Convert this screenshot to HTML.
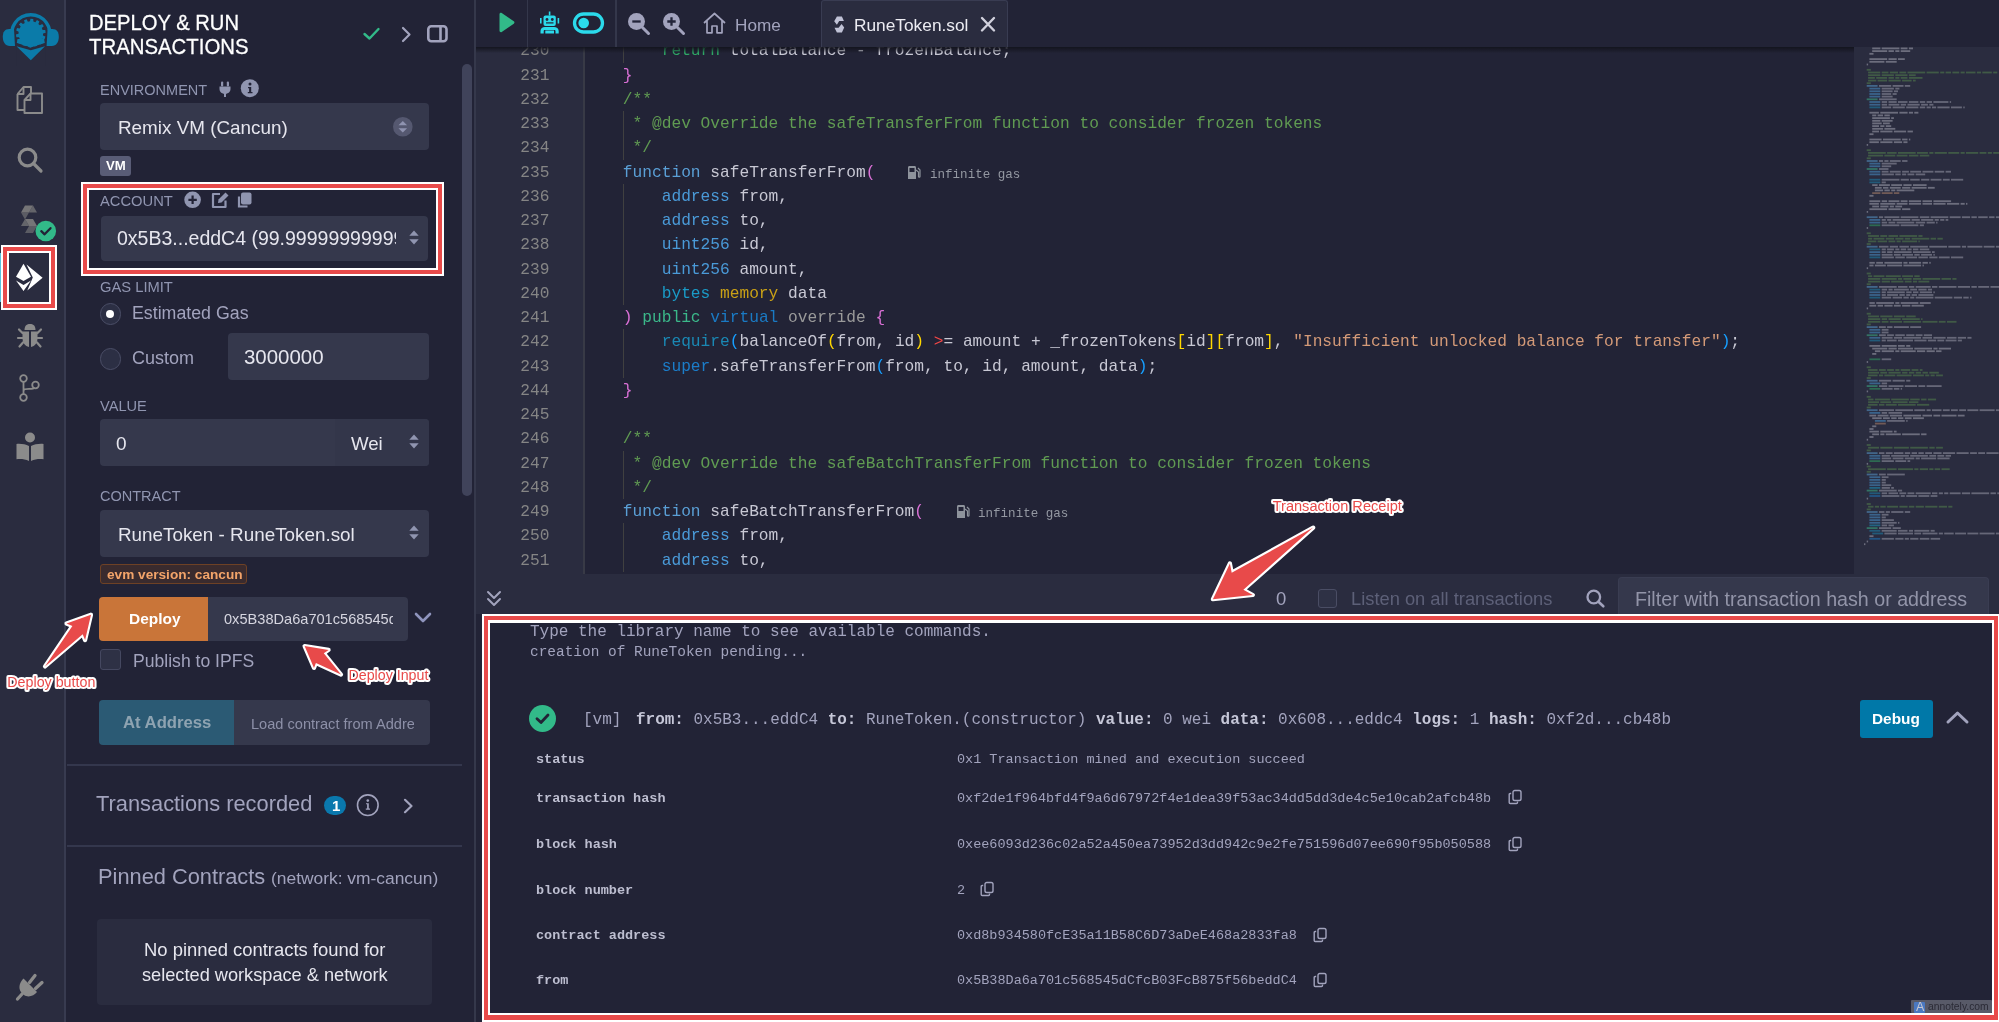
<!DOCTYPE html>
<html><head><meta charset="utf-8"><title>Remix - Deploy & Run</title>
<style>
html,body{margin:0;padding:0;width:1999px;height:1022px;overflow:hidden;background:#222336;}
.r{position:absolute;box-sizing:border-box;}
svg.r{overflow:visible;}
.t{position:absolute;white-space:pre;will-change:transform;font-family:"Liberation Sans",sans-serif;}
</style></head><body>
<div class="r" style="left:0px;top:0px;width:65.00px;height:1022.00px;background:#2a2c3f;"></div>
<div class="r" style="left:64.2px;top:0px;width:2.00px;height:1022.00px;background:#383b50;"></div>
<div class="r" style="left:66px;top:0px;width:408.00px;height:1022.00px;background:#222336;"></div>
<div class="r" style="left:474px;top:0px;width:1.50px;height:1022.00px;background:#35384b;"></div>
<div class="r" style="left:475.5px;top:0px;width:1523.50px;height:1022.00px;background:#222336;"></div>
<svg class="r" style="left:0px;top:0px;" width="66.00" height="66.00" viewBox="0 0 66 66">
<g fill="#0b7ba9">
<path d="M10.83 40.49 A21.0 21.0 0 1 1 50.77 40.49 L47.54 39.44 A17.6 17.6 0 1 0 14.06 39.44Z"/>
<path d="M14 29 L9.3 29 C4.6 29 2.8 32.2 2.8 36.8 C2.8 42.3 5.2 45.9 9.8 45.9 L15 45.9Z"/>
<path d="M47.6 29 L52.3 29 C57 29 58.8 32.2 58.8 36.8 C58.8 42.3 56.4 45.9 51.8 45.9 L46.6 45.9Z"/>
<path d="M29.97 21.33 L30.47 18.70 L33.26 18.90 L33.38 21.57 L35.38 22.18 L36.96 20.03 L39.39 21.43 L38.34 23.88 L39.88 25.30 L42.24 24.05 L43.82 26.36 L41.81 28.11 L42.58 30.06 L45.25 29.96 L45.67 32.73 L43.10 33.43 L42.95 35.52 L45.40 36.59 L44.58 39.27 L41.95 38.79 L40.91 40.60 L42.65 42.63 L40.75 44.69 L38.60 43.11 L36.87 44.30 L37.56 46.88 L34.96 47.91 L33.70 45.55 L31.63 45.87 L31.13 48.50 L28.34 48.30 L28.22 45.63 L26.22 45.02 L24.64 47.17 L22.21 45.77 L23.26 43.32 L21.72 41.90 L19.36 43.15 L17.78 40.84 L19.79 39.09 L19.02 37.14 L16.35 37.24 L15.93 34.47 L18.50 33.77 L18.65 31.68 L16.20 30.61 L17.02 27.93 L19.65 28.41 L20.69 26.60 L18.95 24.57 L20.85 22.51 L23.00 24.09 L24.73 22.90 L24.04 20.32 L26.64 19.29 L27.90 21.65Z"/>
<path d="M17.5 39 L44.1 39 L44.8 43.1 L30.8 47.6 L16.8 43.1Z"/>
</g>
<path d="M16.2 43.2 L30.8 47.7 L45.4 43.2 L45.4 66 L16.2 66Z" fill="#2a2c3f"/>
<path d="M16.5 46.3 L30.8 50.3 L45 46.3 L30.8 60.2Z" fill="#0b7ba9"/>
</svg>
<svg class="r" style="left:15px;top:84px;" width="31.00" height="31.00" viewBox="0 0 31 31"><g fill="none" stroke="#8b8b8b" stroke-width="1.9" stroke-linejoin="round">
<path d="M2.5 10 L8.5 3 L16 3 L16 9 M2.5 10 L2.5 26 L10 26"/>
<path d="M9.5 16 L15.5 9.5 L27 9.5 L27 29 L9.5 29 Z"/>
<path d="M9.5 16 L15.5 16 L15.5 9.5"/>
<path d="M2.5 10 L8.5 10 L8.5 3"/>
</g></svg>
<svg class="r" style="left:15px;top:145px;" width="30.00" height="30.00" viewBox="0 0 30 30"><g fill="none" stroke="#8b8b8b" stroke-width="3.2" stroke-linecap="round"><circle cx="12.5" cy="12.5" r="8.3"/><path d="M18.5 18.5 L26 26"/></g></svg>
<svg class="r" style="left:19px;top:203px;" width="23.00" height="31.00" viewBox="0 0 23 31"><g fill="#7d7d7d">
<path d="M6 2.5 L14 2.5 L10 9.5 L2 9.5 Z" opacity=".9"/><path d="M14 2.5 L18 9.5 L10 9.5Z" opacity=".7"/><path d="M2 9.5 L10 9.5 L6 16.5 Z" opacity=".6"/>
<path d="M6 16 L14 16 L18 23 L10 23Z" opacity=".9"/><path d="M6 16 L10 23 L2 23Z" opacity=".7"/><path d="M10 23 L18 23 L14 30 L6 30Z" opacity=".6"/>
</g></svg>
<svg class="r" style="left:35px;top:220px;" width="22.00" height="22.00" viewBox="0 0 22 22"><circle cx="10.8" cy="11" r="10.3" fill="#32ba89"/><path d="M6.3 11.2 L9.6 14.3 L15.5 8.2" fill="none" stroke="#222336" stroke-width="2.3" stroke-linecap="round" stroke-linejoin="round"/></svg>
<div class="r" style="left:0px;top:253px;width:2.50px;height:49.00px;background:#5bc0de;"></div>
<div class="r" style="left:1px;top:244.5px;width:56.00px;height:65.50px;background:#ffffff;"></div>
<div class="r" style="left:3px;top:246.5px;width:52.00px;height:61.50px;background:#e84a4a;"></div>
<div class="r" style="left:7px;top:250.5px;width:44.00px;height:53.50px;background:#ffffff;"></div>
<div class="r" style="left:9px;top:252.5px;width:40.00px;height:49.50px;background:#2a2c3f;"></div>
<svg class="r" style="left:0px;top:250px;" width="66.00" height="50.00" viewBox="0 0 66 50"><g fill="#ffffff">
<path d="M16 26.8 L23.5 13.8 L31 26.8 L23.5 31Z"/>
<path d="M16 30.5 L23.5 35 L31 30.5 L23.5 41Z"/>
<path d="M26.5 14.5 L42.6 27.8 L27.3 40.5 L32.8 27.6Z"/>
</g></svg>
<svg class="r" style="left:16px;top:322px;" width="28.00" height="28.00" viewBox="0 0 28 28"><g fill="#8b8b8b">
<path d="M8.5 8 C8.5 3.5 11 2 14 2 C17 2 19.5 3.5 19.5 8 Z"/>
<path d="M6.5 9.5 L13 9.5 L13 25 C9 24 6.5 21 6.5 16 Z"/>
<path d="M15 9.5 L21.5 9.5 L21.5 16 C21.5 21 19 24 15 25 Z"/>
</g><g stroke="#8b8b8b" stroke-width="2.2" stroke-linecap="round" fill="none">
<path d="M6.5 11 L3 7.5 M21.5 11 L25 7.5 M6.5 16 L2 16 M21.5 16 L26 16 M7 20.5 L3.5 24.5 M21 20.5 L24.5 24.5"/></g></svg>
<svg class="r" style="left:17px;top:373px;" width="25.00" height="30.00" viewBox="0 0 25 30"><g fill="none" stroke="#8b8b8b" stroke-width="1.8">
<circle cx="6.5" cy="5.5" r="3.3"/><circle cx="18.5" cy="12" r="3.3"/><circle cx="6.5" cy="24.5" r="3.3"/>
<path d="M6.5 8.8 L6.5 21.2 M6.5 18.5 C6.5 16 8 15.8 12 15.8 C15 15.8 16.8 15.8 17.2 15"/></g></svg>
<svg class="r" style="left:14px;top:431px;" width="32.00" height="32.00" viewBox="0 0 32 32"><g fill="#8b8b8b"><circle cx="16" cy="6.5" r="5"/>
<path d="M2.5 13 C7 12.5 11.5 13.5 15 15 L15 30 C11 28.3 7 27.8 2.5 28.3Z"/>
<path d="M29.5 13 C25 12.5 20.5 13.5 17 15 L17 30 C21 28.3 25 27.8 29.5 28.3Z"/></g></svg>
<svg class="r" style="left:14px;top:971px;" width="32.00" height="31.00" viewBox="0 0 32 31"><g fill="#8b8b8b">
<path d="M9.5 7.5 L23 21 C20 25 14 27 10 24 L7 21 C4 17 5.5 11.5 9.5 7.5Z"/>
</g><g stroke="#8b8b8b" stroke-width="3.3" stroke-linecap="round">
<path d="M15.5 11.5 L21 4.5 M21.5 17.5 L28 11.5 M8.5 22.5 L3.5 28"/></g></svg>
<div class="t" style="left:88.50px;top:11.00px;font-size:20.20px;line-height:24px;color:#ffffff;font-family:'Liberation Sans',sans-serif;-webkit-text-stroke:0.25px #fff;transform:scaleY(1.09);transform-origin:0 19.00px;">DEPLOY &amp; RUN</div>
<div class="t" style="left:88.50px;top:34.94px;font-size:20.36px;line-height:24px;color:#ffffff;font-family:'Liberation Sans',sans-serif;-webkit-text-stroke:0.25px #fff;transform:scaleY(1.09);transform-origin:0 19.06px;">TRANSACTIONS</div>
<svg class="r" style="left:362px;top:26px;" width="19.00" height="15.00" viewBox="0 0 19 15"><path d="M2.5 8 L7.5 12.5 L16.5 3" fill="none" stroke="#32ba89" stroke-width="2.4" stroke-linecap="round" stroke-linejoin="round"/></svg>
<svg class="r" style="left:400px;top:25px;" width="13.00" height="18.00" viewBox="0 0 13 18"><path d="M3 3 L9.5 9.5 L3 16" fill="none" stroke="#a2a3bd" stroke-width="2.2" stroke-linecap="round" stroke-linejoin="round"/></svg>
<svg class="r" style="left:425px;top:23px;" width="25.00" height="22.00" viewBox="0 0 25 22"><g fill="none" stroke="#a2a3bd" stroke-width="2.6"><rect x="3.3" y="3.3" width="18.2" height="15" rx="3"/><path d="M15.5 3.5 L15.5 18.3"/></g></svg>
<div class="r" style="left:462.2px;top:64px;width:10.00px;height:432.00px;background:#40435a;border-radius:6px;"></div>
<div class="t" style="left:100.30px;top:81.67px;font-size:14.51px;line-height:17px;color:#9095b0;font-family:'Liberation Sans',sans-serif;transform:scaleY(1.07);transform-origin:0 13.53px;">ENVIRONMENT</div>
<svg class="r" style="left:217px;top:80px;" width="16.00" height="18.00" viewBox="0 0 16 18"><g fill="#9095b0"><rect x="4" y="1.5" width="2.2" height="5" rx="1"/><rect x="9.8" y="1.5" width="2.2" height="5" rx="1"/><path d="M2.5 6.5 L13.5 6.5 L13.5 9 C13.5 12 11 13.5 9 13.8 L9 17 L7 17 L7 13.8 C5 13.5 2.5 12 2.5 9Z"/></g></svg>
<svg class="r" style="left:240px;top:78px;" width="20.00" height="20.00" viewBox="0 0 20 20"><circle cx="9.8" cy="10.2" r="9" fill="#9095b0"/><g fill="#222336"><circle cx="10" cy="6" r="1.5"/><path d="M8 9 L11.2 9 L11.2 14 L12.5 14 L12.5 15.3 L7.8 15.3 L7.8 14 L9.1 14 L9.1 10.3 L8 10.3Z"/></g></svg>
<div class="r" style="left:100px;top:103px;width:329.00px;height:47.00px;background:#35384c;border-radius:4px;"></div>
<div class="t" style="left:117.50px;top:115.95px;font-size:18.88px;line-height:23px;color:#e6e6ee;font-family:'Liberation Sans',sans-serif;">Remix VM (Cancun)</div>
<svg class="r" style="left:392px;top:116px;" width="22.00" height="22.00" viewBox="0 0 22 22"><circle cx="10.8" cy="10.8" r="9.8" fill="#555870"/><g fill="#8f93b0"><path d="M6.5 9.3 L10.8 5 L15.1 9.3Z"/><path d="M6.5 12.3 L10.8 16.6 L15.1 12.3Z"/></g></svg>
<div class="r" style="left:100px;top:156px;width:31.00px;height:20.00px;background:#595c76;border-radius:3px;"></div>
<div class="t" style="left:105.50px;top:157.72px;font-size:13.20px;line-height:16px;color:#ffffff;font-family:'Liberation Sans',sans-serif;font-weight:bold;">VM</div>
<div class="r" style="left:81px;top:182px;width:362.70px;height:93.50px;background:#ffffff;"></div>
<div class="r" style="left:83px;top:184px;width:358.70px;height:89.50px;background:#e84a4a;"></div>
<div class="r" style="left:87px;top:188px;width:350.70px;height:81.50px;background:#ffffff;"></div>
<div class="r" style="left:89px;top:190px;width:346.70px;height:77.50px;background:#222336;"></div>
<div class="t" style="left:100.00px;top:192.19px;font-size:14.74px;line-height:18px;color:#9095b0;font-family:'Liberation Sans',sans-serif;transform:scaleY(1.05);transform-origin:0 14.11px;">ACCOUNT</div>
<svg class="r" style="left:183px;top:190px;" width="20.00" height="20.00" viewBox="0 0 20 20"><circle cx="9.6" cy="9.8" r="8.3" fill="#9095b0"/><path d="M9.6 5.6 L9.6 14 M5.4 9.8 L13.8 9.8" stroke="#222336" stroke-width="2.2"/></svg>
<svg class="r" style="left:210px;top:190px;" width="20.00" height="20.00" viewBox="0 0 20 20"><g fill="none" stroke="#9095b0" stroke-width="2.2" stroke-linejoin="round"><path d="M10 4 L3 4 L3 17 L15.5 17 L15.5 10.5"/></g><path d="M8 13 L8.5 9.5 L15.5 2.5 L18.5 5.5 L11.5 12.5Z" fill="#9095b0"/></svg>
<svg class="r" style="left:236px;top:191px;" width="18.00" height="18.00" viewBox="0 0 18 18"><g fill="#9095b0"><rect x="5" y="1.5" width="10.5" height="12" rx="2"/></g><path d="M3 5.5 L3 15.5 L11.5 15.5" fill="none" stroke="#9095b0" stroke-width="2.2"/></svg>
<div class="r" style="left:100.5px;top:216px;width:327.80px;height:44.50px;background:#35384c;border-radius:4px;"></div>
<div class="t" style="left:117.40px;top:227.04px;font-size:19.50px;line-height:23px;color:#e6e6ee;font-family:'Liberation Sans',sans-serif;width:279.00px;overflow:hidden;">0x5B3...eddC4 (99.999999999999 ether)</div>
<svg class="r" style="left:407.5px;top:229px;" width="12.00" height="18.00" viewBox="0 0 12.0 18"><g fill="#9095b0"><path d="M1.3 6.8 L6 1.6 L10.7 6.8Z"/><path d="M1.3 10.2 L6 15.4 L10.7 10.2Z"/></g></svg>
<div class="t" style="left:100.00px;top:278.49px;font-size:14.74px;line-height:18px;color:#9095b0;font-family:'Liberation Sans',sans-serif;">GAS LIMIT</div>
<div class="r" style="left:99.5px;top:303.3px;width:21.5px;height:21.5px;border:1.6px solid #4b4e67;border-radius:50%;background:#2c2f44"></div>
<div class="r" style="left:106.4px;top:310.1px;width:8px;height:8px;border-radius:50%;background:#ffffff"></div>
<div class="r" style="left:99.5px;top:348px;width:21.5px;height:21.5px;border:1.6px solid #4b4e67;border-radius:50%;background:#2c2f44"></div>
<div class="t" style="left:132.40px;top:303.04px;font-size:17.77px;line-height:21px;color:#a2a3bd;font-family:'Liberation Sans',sans-serif;">Estimated Gas</div>
<div class="t" style="left:132.40px;top:346.76px;font-size:18.00px;line-height:22px;color:#a2a3bd;font-family:'Liberation Sans',sans-serif;">Custom</div>
<div class="r" style="left:227.5px;top:333px;width:201.80px;height:47.30px;background:#35384c;border-radius:4px;"></div>
<div class="t" style="left:244.40px;top:344.41px;font-size:20.45px;line-height:25px;color:#e6e6ee;font-family:'Liberation Sans',sans-serif;">3000000</div>
<div class="t" style="left:100.00px;top:396.94px;font-size:14.60px;line-height:18px;color:#9095b0;font-family:'Liberation Sans',sans-serif;">VALUE</div>
<div class="r" style="left:100px;top:419.2px;width:329.30px;height:46.80px;background:#35384c;border-radius:4px;"></div>
<div class="r" style="left:334.8px;top:419.2px;width:94.50px;height:46.80px;background:#33364a;border-radius:0 4px 4px 0;"></div>
<div class="t" style="left:116.00px;top:431.91px;font-size:19.00px;line-height:23px;color:#e6e6ee;font-family:'Liberation Sans',sans-serif;">0</div>
<div class="t" style="left:351.20px;top:432.53px;font-size:18.65px;line-height:22px;color:#e6e6ee;font-family:'Liberation Sans',sans-serif;">Wei</div>
<svg class="r" style="left:407.5px;top:433px;" width="12.00" height="18.00" viewBox="0 0 12.0 18"><g fill="#9095b0"><path d="M1.3 6.8 L6 1.6 L10.7 6.8Z"/><path d="M1.3 10.2 L6 15.4 L10.7 10.2Z"/></g></svg>
<div class="t" style="left:100.00px;top:488.46px;font-size:14.53px;line-height:17px;color:#9095b0;font-family:'Liberation Sans',sans-serif;">CONTRACT</div>
<div class="r" style="left:100px;top:510.2px;width:329.30px;height:46.60px;background:#35384c;border-radius:4px;"></div>
<div class="t" style="left:117.50px;top:522.97px;font-size:18.85px;line-height:23px;color:#e6e6ee;font-family:'Liberation Sans',sans-serif;">RuneToken - RuneToken.sol</div>
<svg class="r" style="left:407.5px;top:524px;" width="12.00" height="18.00" viewBox="0 0 12.0 18"><g fill="#9095b0"><path d="M1.3 6.8 L6 1.6 L10.7 6.8Z"/><path d="M1.3 10.2 L6 15.4 L10.7 10.2Z"/></g></svg>
<div class="r" style="left:100px;top:564.2px;width:146.9px;height:19.4px;border:1px solid #6e4125;border-radius:3px;background:#3a2b2e"></div>
<div class="t" style="left:106.70px;top:567.27px;font-size:13.63px;line-height:16px;color:#f3a46a;font-family:'Liberation Sans',sans-serif;font-weight:bold;">evm version: cancun</div>
<div class="r" style="left:99.4px;top:597.4px;width:108.40px;height:43.60px;background:#c97539;border-radius:4px 0 0 4px;"></div>
<div class="r" style="left:207.8px;top:597.4px;width:200.30px;height:43.60px;background:#35384c;border-radius:0 4px 4px 0;"></div>
<div class="t" style="left:128.50px;top:609.45px;font-size:15.44px;line-height:19px;color:#ffffff;font-family:'Liberation Sans',sans-serif;font-weight:bold;">Deploy</div>
<div class="t" style="left:224.00px;top:610.24px;font-size:14.60px;line-height:18px;color:#d6d6e0;font-family:'Liberation Sans',sans-serif;width:169.00px;overflow:hidden;">0x5B38Da6a701c568545dCfcB03FcB875f56beddC4</div>
<svg class="r" style="left:413px;top:610px;" width="20.00" height="17.00" viewBox="0 0 20 17"><path d="M3 4 L10 11 L17 4" fill="none" stroke="#8f94bd" stroke-width="2.6" stroke-linecap="round" stroke-linejoin="round"/></svg>
<div class="r" style="left:100px;top:648.9px;width:21px;height:21px;border:1.2px solid #454860;border-radius:3px;background:#2e3145"></div>
<div class="t" style="left:132.80px;top:650.80px;font-size:17.58px;line-height:21px;color:#a2a3bd;font-family:'Liberation Sans',sans-serif;">Publish to IPFS</div>
<div class="r" style="left:99.4px;top:700px;width:134.60px;height:45.20px;background:#2b5a74;border-radius:4px 0 0 4px;"></div>
<div class="r" style="left:234px;top:700px;width:195.60px;height:45.20px;background:#35384c;border-radius:0 4px 4px 0;"></div>
<div class="t" style="left:123.00px;top:713.11px;font-size:16.71px;line-height:20px;color:#8ea3b1;font-family:'Liberation Sans',sans-serif;font-weight:bold;">At Address</div>
<div class="t" style="left:251.30px;top:714.94px;font-size:14.60px;line-height:18px;color:#8d90a8;font-family:'Liberation Sans',sans-serif;width:163.00px;overflow:hidden;">Load contract from Address</div>
<div class="r" style="left:67px;top:764px;width:395.00px;height:2.00px;background:#34374d;"></div>
<div class="t" style="left:95.70px;top:790.53px;font-size:21.84px;line-height:26px;color:#a2a3bd;font-family:'Liberation Sans',sans-serif;">Transactions recorded</div>
<div class="r" style="left:324px;top:795.5px;width:22px;height:19.7px;border-radius:10px;background:#0a78ad"></div>
<div class="t" style="left:331.50px;top:796.80px;font-size:15.00px;line-height:18px;color:#ffffff;font-family:'Liberation Sans',sans-serif;font-weight:bold;">1</div>
<svg class="r" style="left:355px;top:793px;" width="26.00" height="25.00" viewBox="0 0 26 25"><circle cx="12.8" cy="12.2" r="10.3" fill="none" stroke="#a2a3bd" stroke-width="1.6"/><g fill="#a2a3bd"><circle cx="12.8" cy="7.6" r="1.3"/><path d="M11 10.2 L13.8 10.2 L13.8 15.6 L15 15.6 L15 16.8 L10.8 16.8 L10.8 15.6 L12.1 15.6 L12.1 11.3 L11 11.3Z"/></g></svg>
<svg class="r" style="left:402px;top:797px;" width="14.00" height="18.00" viewBox="0 0 14 18"><path d="M3 2.8 L9.5 9 L3 15.2" fill="none" stroke="#a2a3bd" stroke-width="2.2" stroke-linecap="round" stroke-linejoin="round"/></svg>
<div class="r" style="left:67px;top:844.6px;width:395.00px;height:2.00px;background:#34374d;"></div>
<div class="t" style="left:97.80px;top:863.84px;font-size:21.80px;line-height:26px;color:#a2a3bd;font-family:'Liberation Sans',sans-serif;">Pinned Contracts</div>
<div class="t" style="left:271.00px;top:867.87px;font-size:17.40px;line-height:21px;color:#a2a3bd;font-family:'Liberation Sans',sans-serif;">(network: vm-cancun)</div>
<div class="r" style="left:96.8px;top:918.7px;width:335.40px;height:86.20px;background:#2a2c3f;border-radius:4px;"></div>
<div class="t" style="left:144.00px;top:938.62px;font-size:18.41px;line-height:22px;color:#e6e6ee;font-family:'Liberation Sans',sans-serif;">No pinned contracts found for</div>
<div class="t" style="left:141.90px;top:964.00px;font-size:18.19px;line-height:22px;color:#e6e6ee;font-family:'Liberation Sans',sans-serif;">selected workspace &amp; network</div>
<div class="r" style="left:475.5px;top:46px;width:107.50px;height:528.00px;background:#2a2c3f;"></div>
<div class="r" style="left:583px;top:46px;width:2.00px;height:528.00px;background:#383a46;"></div>
<div class="r" style="left:1854px;top:46px;width:145.00px;height:528.00px;background:#2a2c3f;"></div>
<div class="r" style="left:475.5px;top:46px;width:1378.5px;height:528px;overflow:hidden">
<div class="t" style="left:108.80px;top:-6.69px;font-size:16.198px;line-height:24.25px;font-family:'Liberation Mono',monospace;"><span style="color:#c8c8d4">        </span><span style="color:#2fa866">return</span><span style="color:#c8c8d4"> totalBalance - frozenBalance;</span></div>
<div class="t" style="left:0px;width:73.50px;text-align:right;top:-6.69px;font-size:16.198px;line-height:24.25px;font-family:'Liberation Mono',monospace;color:#858585">230</div>
<div class="t" style="left:108.80px;top:17.56px;font-size:16.198px;line-height:24.25px;font-family:'Liberation Mono',monospace;"><span style="color:#c8c8d4">    </span><span style="color:#da70d6">}</span></div>
<div class="t" style="left:0px;width:73.50px;text-align:right;top:17.56px;font-size:16.198px;line-height:24.25px;font-family:'Liberation Mono',monospace;color:#858585">231</div>
<div class="t" style="left:108.80px;top:41.81px;font-size:16.198px;line-height:24.25px;font-family:'Liberation Mono',monospace;"><span style="color:#609b52">    /**</span></div>
<div class="t" style="left:0px;width:73.50px;text-align:right;top:41.81px;font-size:16.198px;line-height:24.25px;font-family:'Liberation Mono',monospace;color:#858585">232</div>
<div class="t" style="left:108.80px;top:66.06px;font-size:16.198px;line-height:24.25px;font-family:'Liberation Mono',monospace;"><span style="color:#609b52">     * @dev Override the safeTransferFrom function to consider frozen tokens</span></div>
<div class="t" style="left:0px;width:73.50px;text-align:right;top:66.06px;font-size:16.198px;line-height:24.25px;font-family:'Liberation Mono',monospace;color:#858585">233</div>
<div class="t" style="left:108.80px;top:90.31px;font-size:16.198px;line-height:24.25px;font-family:'Liberation Mono',monospace;"><span style="color:#609b52">     */</span></div>
<div class="t" style="left:0px;width:73.50px;text-align:right;top:90.31px;font-size:16.198px;line-height:24.25px;font-family:'Liberation Mono',monospace;color:#858585">234</div>
<div class="t" style="left:108.80px;top:114.56px;font-size:16.198px;line-height:24.25px;font-family:'Liberation Mono',monospace;"><span style="color:#c8c8d4">    </span><span style="color:#5a9fd6">function</span><span style="color:#c8c8d4"> safeTransferFrom</span><span style="color:#da70d6">(</span></div>
<div class="t" style="left:0px;width:73.50px;text-align:right;top:114.56px;font-size:16.198px;line-height:24.25px;font-family:'Liberation Mono',monospace;color:#858585">235</div>
<div class="t" style="left:108.80px;top:138.81px;font-size:16.198px;line-height:24.25px;font-family:'Liberation Mono',monospace;"><span style="color:#c8c8d4">        </span><span style="color:#4a9ad8">address</span><span style="color:#c8c8d4"> from,</span></div>
<div class="t" style="left:0px;width:73.50px;text-align:right;top:138.81px;font-size:16.198px;line-height:24.25px;font-family:'Liberation Mono',monospace;color:#858585">236</div>
<div class="t" style="left:108.80px;top:163.06px;font-size:16.198px;line-height:24.25px;font-family:'Liberation Mono',monospace;"><span style="color:#c8c8d4">        </span><span style="color:#4a9ad8">address</span><span style="color:#c8c8d4"> to,</span></div>
<div class="t" style="left:0px;width:73.50px;text-align:right;top:163.06px;font-size:16.198px;line-height:24.25px;font-family:'Liberation Mono',monospace;color:#858585">237</div>
<div class="t" style="left:108.80px;top:187.31px;font-size:16.198px;line-height:24.25px;font-family:'Liberation Mono',monospace;"><span style="color:#c8c8d4">        </span><span style="color:#4a9ad8">uint256</span><span style="color:#c8c8d4"> id,</span></div>
<div class="t" style="left:0px;width:73.50px;text-align:right;top:187.31px;font-size:16.198px;line-height:24.25px;font-family:'Liberation Mono',monospace;color:#858585">238</div>
<div class="t" style="left:108.80px;top:211.56px;font-size:16.198px;line-height:24.25px;font-family:'Liberation Mono',monospace;"><span style="color:#c8c8d4">        </span><span style="color:#4a9ad8">uint256</span><span style="color:#c8c8d4"> amount,</span></div>
<div class="t" style="left:0px;width:73.50px;text-align:right;top:211.56px;font-size:16.198px;line-height:24.25px;font-family:'Liberation Mono',monospace;color:#858585">239</div>
<div class="t" style="left:108.80px;top:235.81px;font-size:16.198px;line-height:24.25px;font-family:'Liberation Mono',monospace;"><span style="color:#c8c8d4">        </span><span style="color:#1a9bc7">bytes</span><span style="color:#c8c8d4"> </span><span style="color:#c9a016">memory</span><span style="color:#c8c8d4"> data</span></div>
<div class="t" style="left:0px;width:73.50px;text-align:right;top:235.81px;font-size:16.198px;line-height:24.25px;font-family:'Liberation Mono',monospace;color:#858585">240</div>
<div class="t" style="left:108.80px;top:260.06px;font-size:16.198px;line-height:24.25px;font-family:'Liberation Mono',monospace;"><span style="color:#c8c8d4">    </span><span style="color:#da70d6">)</span><span style="color:#c8c8d4"> </span><span style="color:#3bb88a">public</span><span style="color:#c8c8d4"> </span><span style="color:#1a7ac4">virtual</span><span style="color:#c8c8d4"> </span><span style="color:#9a9a9a">override</span><span style="color:#c8c8d4"> </span><span style="color:#da70d6">{</span></div>
<div class="t" style="left:0px;width:73.50px;text-align:right;top:260.06px;font-size:16.198px;line-height:24.25px;font-family:'Liberation Mono',monospace;color:#858585">241</div>
<div class="t" style="left:108.80px;top:284.31px;font-size:16.198px;line-height:24.25px;font-family:'Liberation Mono',monospace;"><span style="color:#c8c8d4">        </span><span style="color:#1a88b4">require</span><span style="color:#179fff">(</span><span style="color:#c8c8d4">balanceOf</span><span style="color:#ffd700">(</span><span style="color:#c8c8d4">from, id</span><span style="color:#ffd700">)</span><span style="color:#c8c8d4"> </span><span style="color:#f44747">&gt;</span><span style="color:#c8c8d4">= amount + _frozenTokens</span><span style="color:#ffd700">[</span><span style="color:#c8c8d4">id</span><span style="color:#ffd700">]</span><span style="color:#ffd700">[</span><span style="color:#c8c8d4">from</span><span style="color:#ffd700">]</span><span style="color:#c8c8d4">, </span><span style="color:#d49a78">"Insufficient unlocked balance for transfer"</span><span style="color:#179fff">)</span><span style="color:#c8c8d4">;</span></div>
<div class="t" style="left:0px;width:73.50px;text-align:right;top:284.31px;font-size:16.198px;line-height:24.25px;font-family:'Liberation Mono',monospace;color:#858585">242</div>
<div class="t" style="left:108.80px;top:308.56px;font-size:16.198px;line-height:24.25px;font-family:'Liberation Mono',monospace;"><span style="color:#c8c8d4">        </span><span style="color:#1b7dca">super</span><span style="color:#c8c8d4">.safeTransferFrom</span><span style="color:#179fff">(</span><span style="color:#c8c8d4">from, to, id, amount, data</span><span style="color:#179fff">)</span><span style="color:#c8c8d4">;</span></div>
<div class="t" style="left:0px;width:73.50px;text-align:right;top:308.56px;font-size:16.198px;line-height:24.25px;font-family:'Liberation Mono',monospace;color:#858585">243</div>
<div class="t" style="left:108.80px;top:332.81px;font-size:16.198px;line-height:24.25px;font-family:'Liberation Mono',monospace;"><span style="color:#c8c8d4">    </span><span style="color:#da70d6">}</span></div>
<div class="t" style="left:0px;width:73.50px;text-align:right;top:332.81px;font-size:16.198px;line-height:24.25px;font-family:'Liberation Mono',monospace;color:#858585">244</div>
<div class="t" style="left:108.80px;top:357.06px;font-size:16.198px;line-height:24.25px;font-family:'Liberation Mono',monospace;"></div>
<div class="t" style="left:0px;width:73.50px;text-align:right;top:357.06px;font-size:16.198px;line-height:24.25px;font-family:'Liberation Mono',monospace;color:#858585">245</div>
<div class="t" style="left:108.80px;top:381.31px;font-size:16.198px;line-height:24.25px;font-family:'Liberation Mono',monospace;"><span style="color:#609b52">    /**</span></div>
<div class="t" style="left:0px;width:73.50px;text-align:right;top:381.31px;font-size:16.198px;line-height:24.25px;font-family:'Liberation Mono',monospace;color:#858585">246</div>
<div class="t" style="left:108.80px;top:405.56px;font-size:16.198px;line-height:24.25px;font-family:'Liberation Mono',monospace;"><span style="color:#609b52">     * @dev Override the safeBatchTransferFrom function to consider frozen tokens</span></div>
<div class="t" style="left:0px;width:73.50px;text-align:right;top:405.56px;font-size:16.198px;line-height:24.25px;font-family:'Liberation Mono',monospace;color:#858585">247</div>
<div class="t" style="left:108.80px;top:429.81px;font-size:16.198px;line-height:24.25px;font-family:'Liberation Mono',monospace;"><span style="color:#609b52">     */</span></div>
<div class="t" style="left:0px;width:73.50px;text-align:right;top:429.81px;font-size:16.198px;line-height:24.25px;font-family:'Liberation Mono',monospace;color:#858585">248</div>
<div class="t" style="left:108.80px;top:454.06px;font-size:16.198px;line-height:24.25px;font-family:'Liberation Mono',monospace;"><span style="color:#c8c8d4">    </span><span style="color:#5a9fd6">function</span><span style="color:#c8c8d4"> safeBatchTransferFrom</span><span style="color:#da70d6">(</span></div>
<div class="t" style="left:0px;width:73.50px;text-align:right;top:454.06px;font-size:16.198px;line-height:24.25px;font-family:'Liberation Mono',monospace;color:#858585">249</div>
<div class="t" style="left:108.80px;top:478.31px;font-size:16.198px;line-height:24.25px;font-family:'Liberation Mono',monospace;"><span style="color:#c8c8d4">        </span><span style="color:#4a9ad8">address</span><span style="color:#c8c8d4"> from,</span></div>
<div class="t" style="left:0px;width:73.50px;text-align:right;top:478.31px;font-size:16.198px;line-height:24.25px;font-family:'Liberation Mono',monospace;color:#858585">250</div>
<div class="t" style="left:108.80px;top:502.56px;font-size:16.198px;line-height:24.25px;font-family:'Liberation Mono',monospace;"><span style="color:#c8c8d4">        </span><span style="color:#4a9ad8">address</span><span style="color:#c8c8d4"> to,</span></div>
<div class="t" style="left:0px;width:73.50px;text-align:right;top:502.56px;font-size:16.198px;line-height:24.25px;font-family:'Liberation Mono',monospace;color:#858585">251</div>
</div>
<div class="r" style="left:622.5px;top:46px;width:1.60px;height:16.50px;background:#404040;"></div>
<div class="r" style="left:622.5px;top:111.0px;width:1.60px;height:48.50px;background:#404040;"></div>
<div class="r" style="left:622.5px;top:183.75px;width:1.60px;height:121.25px;background:#404040;"></div>
<div class="r" style="left:622.5px;top:329.25px;width:1.60px;height:48.50px;background:#404040;"></div>
<div class="r" style="left:622.5px;top:450.5px;width:1.60px;height:48.50px;background:#404040;"></div>
<div class="r" style="left:622.5px;top:523.25px;width:1.60px;height:48.50px;background:#404040;"></div>
<svg class="r" style="left:907px;top:164.6px;" width="14.00" height="15.00" viewBox="0 0 14 15.0"><g fill="#8e939c"><path d="M1 2.5 C1 1.5 1.7 1 2.5 1 L7.5 1 C8.3 1 9 1.5 9 2.5 L9 14 L1 14Z"/></g><rect x="2.5" y="3" width="5" height="4" fill="#222336"/><path d="M9 5 L11.5 7 L11.5 11.5 C11.5 12.5 13 12.5 13 11.5 L13 5 L11 3" fill="none" stroke="#8e939c" stroke-width="1.2"/></svg>
<div class="t" style="left:929.60px;top:167.76px;font-size:12.55px;line-height:15px;color:#9498a2;font-family:'Liberation Mono',monospace;">infinite gas</div>
<svg class="r" style="left:955.6px;top:504.1px;" width="14.00" height="15.00" viewBox="0 0 14.0 15.0"><g fill="#8e939c"><path d="M1 2.5 C1 1.5 1.7 1 2.5 1 L7.5 1 C8.3 1 9 1.5 9 2.5 L9 14 L1 14Z"/></g><rect x="2.5" y="3" width="5" height="4" fill="#222336"/><path d="M9 5 L11.5 7 L11.5 11.5 C11.5 12.5 13 12.5 13 11.5 L13 5 L11 3" fill="none" stroke="#8e939c" stroke-width="1.2"/></svg>
<div class="t" style="left:978.20px;top:507.26px;font-size:12.55px;line-height:15px;color:#9498a2;font-family:'Liberation Mono',monospace;">infinite gas</div>
<svg class="r" style="left:1854px;top:46px;" width="145.00" height="528.00" viewBox="0 0 145 528"><rect x="18.2" y="1.5" width="8.2" height="1.8" fill="#c8c8d4" opacity="0.42"/><rect x="27.7" y="1.5" width="17.7" height="1.8" fill="#c8c8d4" opacity="0.42"/><rect x="46.7" y="1.5" width="6.8" height="1.8" fill="#c8c8d4" opacity="0.42"/><rect x="54.9" y="1.5" width="4.1" height="1.8" fill="#c8c8d4" opacity="0.42"/><rect x="18.2" y="4.2" width="15.0" height="1.8" fill="#c8c8d4" opacity="0.42"/><rect x="34.5" y="4.2" width="5.4" height="1.8" fill="#c8c8d4" opacity="0.42"/><rect x="41.3" y="4.2" width="4.1" height="1.8" fill="#c8c8d4" opacity="0.42"/><rect x="46.7" y="4.2" width="9.5" height="1.8" fill="#c8c8d4" opacity="0.42"/><rect x="15.4" y="6.9" width="4.1" height="1.8" fill="#c8c8d4" opacity="0.42"/><rect x="15.4" y="12.2" width="17.7" height="1.8" fill="#c8c8d4" opacity="0.42"/><rect x="34.5" y="12.2" width="8.2" height="1.8" fill="#c8c8d4" opacity="0.42"/><rect x="44.0" y="12.2" width="6.8" height="1.8" fill="#c8c8d4" opacity="0.42"/><rect x="15.4" y="14.9" width="15.0" height="1.8" fill="#c8c8d4" opacity="0.42"/><rect x="31.8" y="14.9" width="10.9" height="1.8" fill="#c8c8d4" opacity="0.42"/><rect x="12.7" y="17.6" width="1.4" height="1.8" fill="#c8c8d4" opacity="0.42"/><rect x="12.7" y="22.9" width="4.1" height="1.8" fill="#609b52" opacity="0.42"/><rect x="14.1" y="25.6" width="12.2" height="1.8" fill="#609b52" opacity="0.42"/><rect x="27.7" y="25.6" width="6.8" height="1.8" fill="#609b52" opacity="0.42"/><rect x="35.8" y="25.6" width="8.2" height="1.8" fill="#609b52" opacity="0.42"/><rect x="45.4" y="25.6" width="6.8" height="1.8" fill="#609b52" opacity="0.42"/><rect x="53.5" y="25.6" width="17.7" height="1.8" fill="#609b52" opacity="0.42"/><rect x="72.6" y="25.6" width="12.2" height="1.8" fill="#609b52" opacity="0.42"/><rect x="86.2" y="25.6" width="4.1" height="1.8" fill="#609b52" opacity="0.42"/><rect x="91.6" y="25.6" width="5.4" height="1.8" fill="#609b52" opacity="0.42"/><rect x="98.4" y="25.6" width="6.8" height="1.8" fill="#609b52" opacity="0.42"/><rect x="106.6" y="25.6" width="4.1" height="1.8" fill="#609b52" opacity="0.42"/><rect x="112.0" y="25.6" width="9.5" height="1.8" fill="#609b52" opacity="0.42"/><rect x="122.9" y="25.6" width="4.1" height="1.8" fill="#609b52" opacity="0.42"/><rect x="128.3" y="25.6" width="9.5" height="1.8" fill="#609b52" opacity="0.42"/><rect x="139.2" y="25.6" width="4.1" height="1.8" fill="#609b52" opacity="0.42"/><rect x="14.1" y="28.3" width="12.2" height="1.8" fill="#609b52" opacity="0.42"/><rect x="27.7" y="28.3" width="12.2" height="1.8" fill="#609b52" opacity="0.42"/><rect x="41.3" y="28.3" width="12.2" height="1.8" fill="#609b52" opacity="0.42"/><rect x="54.9" y="28.3" width="6.8" height="1.8" fill="#609b52" opacity="0.42"/><rect x="14.1" y="31.0" width="6.8" height="1.8" fill="#609b52" opacity="0.42"/><rect x="22.2" y="31.0" width="10.9" height="1.8" fill="#609b52" opacity="0.42"/><rect x="34.5" y="31.0" width="5.4" height="1.8" fill="#609b52" opacity="0.42"/><rect x="41.3" y="31.0" width="4.1" height="1.8" fill="#609b52" opacity="0.42"/><rect x="46.7" y="31.0" width="6.8" height="1.8" fill="#609b52" opacity="0.42"/><rect x="54.9" y="31.0" width="13.6" height="1.8" fill="#609b52" opacity="0.42"/><rect x="14.1" y="33.7" width="8.2" height="1.8" fill="#609b52" opacity="0.42"/><rect x="23.6" y="33.7" width="9.5" height="1.8" fill="#609b52" opacity="0.42"/><rect x="34.5" y="33.7" width="12.2" height="1.8" fill="#609b52" opacity="0.42"/><rect x="48.1" y="33.7" width="9.5" height="1.8" fill="#609b52" opacity="0.42"/><rect x="59.0" y="33.7" width="2.7" height="1.8" fill="#609b52" opacity="0.42"/><rect x="12.7" y="36.3" width="4.1" height="1.8" fill="#609b52" opacity="0.42"/><rect x="12.7" y="39.0" width="10.9" height="1.8" fill="#5a9fd6" opacity=".5"/><rect x="25.0" y="39.0" width="12.2" height="1.8" fill="#c8c8d4" opacity="0.38"/><rect x="38.6" y="39.0" width="10.9" height="1.8" fill="#c8c8d4" opacity="0.38"/><rect x="50.8" y="39.0" width="5.4" height="1.8" fill="#c8c8d4" opacity="0.38"/><rect x="15.4" y="41.7" width="10.9" height="1.8" fill="#4a9ad8" opacity=".5"/><rect x="27.7" y="41.7" width="12.2" height="1.8" fill="#c8c8d4" opacity="0.38"/><rect x="41.3" y="41.7" width="4.1" height="1.8" fill="#c8c8d4" opacity="0.38"/><rect x="15.4" y="44.4" width="10.9" height="1.8" fill="#4a9ad8" opacity=".5"/><rect x="27.7" y="44.4" width="10.9" height="1.8" fill="#c8c8d4" opacity="0.38"/><rect x="39.9" y="44.4" width="4.1" height="1.8" fill="#c8c8d4" opacity="0.38"/><rect x="15.4" y="47.1" width="10.9" height="1.8" fill="#4a9ad8" opacity=".5"/><rect x="27.7" y="47.1" width="9.5" height="1.8" fill="#c8c8d4" opacity="0.38"/><rect x="38.6" y="47.1" width="4.1" height="1.8" fill="#c8c8d4" opacity="0.38"/><rect x="15.4" y="49.7" width="10.9" height="1.8" fill="#4a9ad8" opacity=".5"/><rect x="27.7" y="49.7" width="10.9" height="1.8" fill="#c8c8d4" opacity="0.38"/><rect x="12.7" y="52.4" width="10.9" height="1.8" fill="#3bb88a" opacity=".5"/><rect x="25.0" y="52.4" width="17.7" height="1.8" fill="#c8c8d4" opacity="0.38"/><rect x="15.4" y="55.1" width="10.9" height="1.8" fill="#4a9ad8" opacity=".5"/><rect x="27.7" y="55.1" width="5.4" height="1.8" fill="#c8c8d4" opacity="0.38"/><rect x="34.5" y="55.1" width="8.2" height="1.8" fill="#c8c8d4" opacity="0.38"/><rect x="44.0" y="55.1" width="9.5" height="1.8" fill="#c8c8d4" opacity="0.38"/><rect x="54.9" y="55.1" width="9.5" height="1.8" fill="#c8c8d4" opacity="0.38"/><rect x="65.8" y="55.1" width="5.4" height="1.8" fill="#c8c8d4" opacity="0.38"/><rect x="72.6" y="55.1" width="5.4" height="1.8" fill="#c8c8d4" opacity="0.38"/><rect x="79.4" y="55.1" width="15.0" height="1.8" fill="#c8c8d4" opacity="0.38"/><rect x="95.7" y="55.1" width="1.4" height="1.8" fill="#c8c8d4" opacity="0.38"/><rect x="15.4" y="57.8" width="10.9" height="1.8" fill="#4a9ad8" opacity=".5"/><rect x="27.7" y="57.8" width="5.4" height="1.8" fill="#c8c8d4" opacity="0.38"/><rect x="34.5" y="57.8" width="10.9" height="1.8" fill="#c8c8d4" opacity="0.38"/><rect x="46.7" y="57.8" width="5.4" height="1.8" fill="#c8c8d4" opacity="0.38"/><rect x="53.5" y="57.8" width="12.2" height="1.8" fill="#c8c8d4" opacity="0.38"/><rect x="67.1" y="57.8" width="6.8" height="1.8" fill="#c8c8d4" opacity="0.38"/><rect x="75.3" y="57.8" width="4.1" height="1.8" fill="#c8c8d4" opacity="0.38"/><rect x="15.4" y="60.5" width="10.9" height="1.8" fill="#1a88b4" opacity=".5"/><rect x="27.7" y="60.5" width="9.5" height="1.8" fill="#c8c8d4" opacity="0.38"/><rect x="38.6" y="60.5" width="12.2" height="1.8" fill="#c8c8d4" opacity="0.38"/><rect x="52.2" y="60.5" width="12.2" height="1.8" fill="#c8c8d4" opacity="0.38"/><rect x="65.8" y="60.5" width="5.4" height="1.8" fill="#c8c8d4" opacity="0.38"/><rect x="72.6" y="60.5" width="4.1" height="1.8" fill="#c8c8d4" opacity="0.38"/><rect x="78.0" y="60.5" width="4.1" height="1.8" fill="#c8c8d4" opacity="0.38"/><rect x="83.4" y="60.5" width="12.2" height="1.8" fill="#c8c8d4" opacity="0.38"/><rect x="97.0" y="60.5" width="10.9" height="1.8" fill="#c8c8d4" opacity="0.38"/><rect x="109.3" y="60.5" width="1.4" height="1.8" fill="#c8c8d4" opacity="0.38"/><rect x="15.4" y="65.8" width="9.5" height="1.8" fill="#c8c8d4" opacity="0.42"/><rect x="26.3" y="65.8" width="17.7" height="1.8" fill="#c8c8d4" opacity="0.42"/><rect x="45.4" y="65.8" width="8.2" height="1.8" fill="#c8c8d4" opacity="0.42"/><rect x="54.9" y="65.8" width="4.1" height="1.8" fill="#c8c8d4" opacity="0.42"/><rect x="60.3" y="65.8" width="4.1" height="1.8" fill="#c8c8d4" opacity="0.42"/><rect x="18.2" y="68.5" width="4.1" height="1.8" fill="#c8c8d4" opacity="0.42"/><rect x="23.6" y="68.5" width="5.4" height="1.8" fill="#c8c8d4" opacity="0.42"/><rect x="30.4" y="68.5" width="5.4" height="1.8" fill="#c8c8d4" opacity="0.42"/><rect x="18.2" y="71.2" width="17.7" height="1.8" fill="#c8c8d4" opacity="0.42"/><rect x="37.2" y="71.2" width="2.7" height="1.8" fill="#c8c8d4" opacity="0.42"/><rect x="18.2" y="73.9" width="8.2" height="1.8" fill="#c8c8d4" opacity="0.42"/><rect x="27.7" y="73.9" width="10.9" height="1.8" fill="#c8c8d4" opacity="0.42"/><rect x="18.2" y="76.5" width="9.5" height="1.8" fill="#c8c8d4" opacity="0.42"/><rect x="29.0" y="76.5" width="6.8" height="1.8" fill="#c8c8d4" opacity="0.42"/><rect x="18.2" y="79.2" width="6.8" height="1.8" fill="#c8c8d4" opacity="0.42"/><rect x="26.3" y="79.2" width="4.1" height="1.8" fill="#c8c8d4" opacity="0.42"/><rect x="31.8" y="79.2" width="5.4" height="1.8" fill="#c8c8d4" opacity="0.42"/><rect x="18.2" y="81.9" width="10.9" height="1.8" fill="#c8c8d4" opacity="0.42"/><rect x="30.4" y="81.9" width="10.9" height="1.8" fill="#c8c8d4" opacity="0.42"/><rect x="18.2" y="84.6" width="6.8" height="1.8" fill="#c8c8d4" opacity="0.42"/><rect x="26.3" y="84.6" width="12.2" height="1.8" fill="#c8c8d4" opacity="0.42"/><rect x="39.9" y="84.6" width="12.2" height="1.8" fill="#c8c8d4" opacity="0.42"/><rect x="53.5" y="84.6" width="5.4" height="1.8" fill="#c8c8d4" opacity="0.42"/><rect x="15.4" y="87.3" width="4.1" height="1.8" fill="#c8c8d4" opacity="0.42"/><rect x="15.4" y="92.6" width="12.2" height="1.8" fill="#c8c8d4" opacity="0.42"/><rect x="29.0" y="92.6" width="17.7" height="1.8" fill="#c8c8d4" opacity="0.42"/><rect x="48.1" y="92.6" width="5.4" height="1.8" fill="#c8c8d4" opacity="0.42"/><rect x="54.9" y="92.6" width="1.4" height="1.8" fill="#c8c8d4" opacity="0.42"/><rect x="15.4" y="95.3" width="9.5" height="1.8" fill="#c8c8d4" opacity="0.42"/><rect x="26.3" y="95.3" width="12.2" height="1.8" fill="#c8c8d4" opacity="0.42"/><rect x="39.9" y="95.3" width="8.2" height="1.8" fill="#c8c8d4" opacity="0.42"/><rect x="49.4" y="95.3" width="4.1" height="1.8" fill="#c8c8d4" opacity="0.42"/><rect x="12.7" y="98.0" width="1.4" height="1.8" fill="#c8c8d4" opacity="0.42"/><rect x="12.7" y="103.3" width="4.1" height="1.8" fill="#609b52" opacity="0.42"/><rect x="14.1" y="106.0" width="17.7" height="1.8" fill="#609b52" opacity="0.42"/><rect x="33.1" y="106.0" width="9.5" height="1.8" fill="#609b52" opacity="0.42"/><rect x="44.0" y="106.0" width="17.7" height="1.8" fill="#609b52" opacity="0.42"/><rect x="63.0" y="106.0" width="10.9" height="1.8" fill="#609b52" opacity="0.42"/><rect x="75.3" y="106.0" width="4.1" height="1.8" fill="#609b52" opacity="0.42"/><rect x="80.7" y="106.0" width="12.2" height="1.8" fill="#609b52" opacity="0.42"/><rect x="94.3" y="106.0" width="10.9" height="1.8" fill="#609b52" opacity="0.42"/><rect x="106.6" y="106.0" width="4.1" height="1.8" fill="#609b52" opacity="0.42"/><rect x="112.0" y="106.0" width="12.2" height="1.8" fill="#609b52" opacity="0.42"/><rect x="125.6" y="106.0" width="6.8" height="1.8" fill="#609b52" opacity="0.42"/><rect x="133.8" y="106.0" width="4.1" height="1.8" fill="#609b52" opacity="0.42"/><rect x="139.2" y="106.0" width="5.8" height="1.8" fill="#609b52" opacity="0.42"/><rect x="14.1" y="108.7" width="15.0" height="1.8" fill="#609b52" opacity="0.42"/><rect x="30.4" y="108.7" width="10.9" height="1.8" fill="#609b52" opacity="0.42"/><rect x="42.6" y="108.7" width="10.9" height="1.8" fill="#609b52" opacity="0.42"/><rect x="54.9" y="108.7" width="9.5" height="1.8" fill="#609b52" opacity="0.42"/><rect x="65.8" y="108.7" width="9.5" height="1.8" fill="#609b52" opacity="0.42"/><rect x="12.7" y="111.4" width="4.1" height="1.8" fill="#609b52" opacity="0.42"/><rect x="12.7" y="114.1" width="10.9" height="1.8" fill="#5a9fd6" opacity=".5"/><rect x="25.0" y="114.1" width="4.1" height="1.8" fill="#c8c8d4" opacity="0.38"/><rect x="30.4" y="114.1" width="4.1" height="1.8" fill="#c8c8d4" opacity="0.38"/><rect x="35.8" y="114.1" width="10.9" height="1.8" fill="#c8c8d4" opacity="0.38"/><rect x="48.1" y="114.1" width="5.4" height="1.8" fill="#c8c8d4" opacity="0.38"/><rect x="15.4" y="116.7" width="10.9" height="1.8" fill="#4a9ad8" opacity=".5"/><rect x="27.7" y="116.7" width="15.0" height="1.8" fill="#c8c8d4" opacity="0.38"/><rect x="15.4" y="119.4" width="10.9" height="1.8" fill="#4a9ad8" opacity=".5"/><rect x="27.7" y="119.4" width="9.5" height="1.8" fill="#c8c8d4" opacity="0.38"/><rect x="12.7" y="122.1" width="10.9" height="1.8" fill="#3bb88a" opacity=".5"/><rect x="25.0" y="122.1" width="9.5" height="1.8" fill="#c8c8d4" opacity="0.38"/><rect x="15.4" y="124.8" width="10.9" height="1.8" fill="#4a9ad8" opacity=".5"/><rect x="27.7" y="124.8" width="6.8" height="1.8" fill="#c8c8d4" opacity="0.38"/><rect x="35.8" y="124.8" width="10.9" height="1.8" fill="#c8c8d4" opacity="0.38"/><rect x="48.1" y="124.8" width="6.8" height="1.8" fill="#c8c8d4" opacity="0.38"/><rect x="56.2" y="124.8" width="10.9" height="1.8" fill="#c8c8d4" opacity="0.38"/><rect x="68.5" y="124.8" width="10.9" height="1.8" fill="#c8c8d4" opacity="0.38"/><rect x="80.7" y="124.8" width="9.5" height="1.8" fill="#c8c8d4" opacity="0.38"/><rect x="91.6" y="124.8" width="5.4" height="1.8" fill="#c8c8d4" opacity="0.38"/><rect x="15.4" y="127.5" width="10.9" height="1.8" fill="#4a9ad8" opacity=".5"/><rect x="27.7" y="127.5" width="12.2" height="1.8" fill="#c8c8d4" opacity="0.38"/><rect x="41.3" y="127.5" width="5.4" height="1.8" fill="#c8c8d4" opacity="0.38"/><rect x="48.1" y="127.5" width="4.1" height="1.8" fill="#c8c8d4" opacity="0.38"/><rect x="53.5" y="127.5" width="6.8" height="1.8" fill="#c8c8d4" opacity="0.38"/><rect x="61.7" y="127.5" width="9.5" height="1.8" fill="#c8c8d4" opacity="0.38"/><rect x="15.4" y="132.8" width="10.9" height="1.8" fill="#1a88b4" opacity=".5"/><rect x="27.7" y="132.8" width="17.7" height="1.8" fill="#c8c8d4" opacity="0.38"/><rect x="46.7" y="132.8" width="8.2" height="1.8" fill="#c8c8d4" opacity="0.38"/><rect x="56.2" y="132.8" width="9.5" height="1.8" fill="#c8c8d4" opacity="0.38"/><rect x="67.1" y="132.8" width="8.2" height="1.8" fill="#c8c8d4" opacity="0.38"/><rect x="76.6" y="132.8" width="10.9" height="1.8" fill="#c8c8d4" opacity="0.38"/><rect x="88.9" y="132.8" width="6.8" height="1.8" fill="#c8c8d4" opacity="0.38"/><rect x="97.0" y="132.8" width="12.2" height="1.8" fill="#c8c8d4" opacity="0.38"/><rect x="15.4" y="135.5" width="10.9" height="1.8" fill="#1a88b4" opacity=".5"/><rect x="27.7" y="135.5" width="4.1" height="1.8" fill="#c8c8d4" opacity="0.38"/><rect x="18.2" y="138.2" width="5.4" height="1.8" fill="#c8c8d4" opacity="0.42"/><rect x="25.0" y="138.2" width="10.9" height="1.8" fill="#c8c8d4" opacity="0.42"/><rect x="37.2" y="138.2" width="10.9" height="1.8" fill="#c8c8d4" opacity="0.42"/><rect x="49.4" y="138.2" width="8.2" height="1.8" fill="#c8c8d4" opacity="0.42"/><rect x="59.0" y="138.2" width="13.6" height="1.8" fill="#c8c8d4" opacity="0.42"/><rect x="20.9" y="140.9" width="6.8" height="1.8" fill="#c8c8d4" opacity="0.42"/><rect x="29.0" y="140.9" width="5.4" height="1.8" fill="#c8c8d4" opacity="0.42"/><rect x="35.8" y="140.9" width="10.9" height="1.8" fill="#c8c8d4" opacity="0.42"/><rect x="48.1" y="140.9" width="8.2" height="1.8" fill="#c8c8d4" opacity="0.42"/><rect x="57.6" y="140.9" width="15.0" height="1.8" fill="#c8c8d4" opacity="0.42"/><rect x="73.9" y="140.9" width="6.8" height="1.8" fill="#c8c8d4" opacity="0.42"/><rect x="20.9" y="143.5" width="8.2" height="1.8" fill="#c8c8d4" opacity="0.42"/><rect x="30.4" y="143.5" width="5.4" height="1.8" fill="#c8c8d4" opacity="0.42"/><rect x="37.2" y="143.5" width="4.1" height="1.8" fill="#c8c8d4" opacity="0.42"/><rect x="42.6" y="143.5" width="17.7" height="1.8" fill="#c8c8d4" opacity="0.42"/><rect x="18.2" y="146.2" width="8.2" height="1.8" fill="#d49a78" opacity="0.42"/><rect x="27.7" y="146.2" width="10.9" height="1.8" fill="#d49a78" opacity="0.42"/><rect x="39.9" y="146.2" width="5.4" height="1.8" fill="#d49a78" opacity="0.42"/><rect x="15.4" y="148.9" width="4.1" height="1.8" fill="#c8c8d4" opacity="0.42"/><rect x="15.4" y="154.3" width="10.9" height="1.8" fill="#c8c8d4" opacity="0.42"/><rect x="27.7" y="154.3" width="5.4" height="1.8" fill="#c8c8d4" opacity="0.42"/><rect x="34.5" y="154.3" width="10.9" height="1.8" fill="#c8c8d4" opacity="0.42"/><rect x="46.7" y="154.3" width="6.8" height="1.8" fill="#c8c8d4" opacity="0.42"/><rect x="54.9" y="154.3" width="12.2" height="1.8" fill="#c8c8d4" opacity="0.42"/><rect x="68.5" y="154.3" width="9.5" height="1.8" fill="#c8c8d4" opacity="0.42"/><rect x="79.4" y="154.3" width="17.7" height="1.8" fill="#c8c8d4" opacity="0.42"/><rect x="15.4" y="156.9" width="9.5" height="1.8" fill="#c8c8d4" opacity="0.42"/><rect x="26.3" y="156.9" width="15.0" height="1.8" fill="#c8c8d4" opacity="0.42"/><rect x="42.6" y="156.9" width="10.9" height="1.8" fill="#c8c8d4" opacity="0.42"/><rect x="54.9" y="156.9" width="12.2" height="1.8" fill="#c8c8d4" opacity="0.42"/><rect x="68.5" y="156.9" width="9.5" height="1.8" fill="#c8c8d4" opacity="0.42"/><rect x="79.4" y="156.9" width="12.2" height="1.8" fill="#c8c8d4" opacity="0.42"/><rect x="93.0" y="156.9" width="12.2" height="1.8" fill="#c8c8d4" opacity="0.42"/><rect x="106.6" y="156.9" width="4.1" height="1.8" fill="#c8c8d4" opacity="0.42"/><rect x="112.0" y="156.9" width="1.4" height="1.8" fill="#c8c8d4" opacity="0.42"/><rect x="18.2" y="159.6" width="6.8" height="1.8" fill="#c8c8d4" opacity="0.42"/><rect x="26.3" y="159.6" width="8.2" height="1.8" fill="#c8c8d4" opacity="0.42"/><rect x="35.8" y="159.6" width="4.1" height="1.8" fill="#c8c8d4" opacity="0.42"/><rect x="41.3" y="159.6" width="6.8" height="1.8" fill="#c8c8d4" opacity="0.42"/><rect x="15.4" y="162.3" width="17.7" height="1.8" fill="#c8c8d4" opacity="0.42"/><rect x="34.5" y="162.3" width="12.2" height="1.8" fill="#c8c8d4" opacity="0.42"/><rect x="48.1" y="162.3" width="8.2" height="1.8" fill="#c8c8d4" opacity="0.42"/><rect x="12.7" y="165.0" width="1.4" height="1.8" fill="#c8c8d4" opacity="0.42"/><rect x="12.7" y="170.3" width="10.9" height="1.8" fill="#5a9fd6" opacity=".5"/><rect x="25.0" y="170.3" width="4.1" height="1.8" fill="#c8c8d4" opacity="0.38"/><rect x="30.4" y="170.3" width="15.0" height="1.8" fill="#c8c8d4" opacity="0.38"/><rect x="46.7" y="170.3" width="17.7" height="1.8" fill="#c8c8d4" opacity="0.38"/><rect x="65.8" y="170.3" width="9.5" height="1.8" fill="#c8c8d4" opacity="0.38"/><rect x="76.6" y="170.3" width="17.7" height="1.8" fill="#c8c8d4" opacity="0.38"/><rect x="95.7" y="170.3" width="10.9" height="1.8" fill="#c8c8d4" opacity="0.38"/><rect x="107.9" y="170.3" width="8.2" height="1.8" fill="#c8c8d4" opacity="0.38"/><rect x="117.4" y="170.3" width="5.4" height="1.8" fill="#c8c8d4" opacity="0.38"/><rect x="124.2" y="170.3" width="9.5" height="1.8" fill="#c8c8d4" opacity="0.38"/><rect x="135.1" y="170.3" width="5.4" height="1.8" fill="#c8c8d4" opacity="0.38"/><rect x="141.9" y="170.3" width="3.1" height="1.8" fill="#c8c8d4" opacity="0.38"/><rect x="15.4" y="173.0" width="10.9" height="1.8" fill="#4a9ad8" opacity=".5"/><rect x="27.7" y="173.0" width="4.1" height="1.8" fill="#c8c8d4" opacity="0.38"/><rect x="33.1" y="173.0" width="4.1" height="1.8" fill="#c8c8d4" opacity="0.38"/><rect x="38.6" y="173.0" width="17.7" height="1.8" fill="#c8c8d4" opacity="0.38"/><rect x="57.6" y="173.0" width="8.2" height="1.8" fill="#c8c8d4" opacity="0.38"/><rect x="67.1" y="173.0" width="12.2" height="1.8" fill="#c8c8d4" opacity="0.38"/><rect x="80.7" y="173.0" width="4.1" height="1.8" fill="#c8c8d4" opacity="0.38"/><rect x="86.2" y="173.0" width="4.1" height="1.8" fill="#c8c8d4" opacity="0.38"/><rect x="91.6" y="173.0" width="2.7" height="1.8" fill="#c8c8d4" opacity="0.38"/><rect x="15.4" y="175.7" width="10.9" height="1.8" fill="#4a9ad8" opacity=".5"/><rect x="27.7" y="175.7" width="5.4" height="1.8" fill="#c8c8d4" opacity="0.38"/><rect x="34.5" y="175.7" width="6.8" height="1.8" fill="#c8c8d4" opacity="0.38"/><rect x="42.6" y="175.7" width="17.7" height="1.8" fill="#c8c8d4" opacity="0.38"/><rect x="61.7" y="175.7" width="9.5" height="1.8" fill="#c8c8d4" opacity="0.38"/><rect x="72.6" y="175.7" width="8.2" height="1.8" fill="#c8c8d4" opacity="0.38"/><rect x="82.1" y="175.7" width="1.4" height="1.8" fill="#c8c8d4" opacity="0.38"/><rect x="15.4" y="178.4" width="10.9" height="1.8" fill="#2fa866" opacity=".5"/><rect x="27.7" y="178.4" width="17.7" height="1.8" fill="#c8c8d4" opacity="0.38"/><rect x="46.7" y="178.4" width="17.7" height="1.8" fill="#c8c8d4" opacity="0.38"/><rect x="65.8" y="178.4" width="4.1" height="1.8" fill="#c8c8d4" opacity="0.38"/><rect x="12.7" y="181.1" width="1.4" height="1.8" fill="#c8c8d4" opacity="0.42"/><rect x="12.7" y="186.4" width="4.1" height="1.8" fill="#609b52" opacity="0.42"/><rect x="14.1" y="189.1" width="10.9" height="1.8" fill="#609b52" opacity="0.42"/><rect x="26.3" y="189.1" width="6.8" height="1.8" fill="#609b52" opacity="0.42"/><rect x="34.5" y="189.1" width="9.5" height="1.8" fill="#609b52" opacity="0.42"/><rect x="45.4" y="189.1" width="17.7" height="1.8" fill="#609b52" opacity="0.42"/><rect x="64.4" y="189.1" width="4.1" height="1.8" fill="#609b52" opacity="0.42"/><rect x="14.1" y="191.8" width="4.1" height="1.8" fill="#609b52" opacity="0.42"/><rect x="19.5" y="191.8" width="10.9" height="1.8" fill="#609b52" opacity="0.42"/><rect x="31.8" y="191.8" width="8.2" height="1.8" fill="#609b52" opacity="0.42"/><rect x="41.3" y="191.8" width="8.2" height="1.8" fill="#609b52" opacity="0.42"/><rect x="50.8" y="191.8" width="5.4" height="1.8" fill="#609b52" opacity="0.42"/><rect x="57.6" y="191.8" width="17.7" height="1.8" fill="#609b52" opacity="0.42"/><rect x="76.6" y="191.8" width="5.4" height="1.8" fill="#609b52" opacity="0.42"/><rect x="83.4" y="191.8" width="5.4" height="1.8" fill="#609b52" opacity="0.42"/><rect x="14.1" y="194.5" width="8.2" height="1.8" fill="#609b52" opacity="0.42"/><rect x="23.6" y="194.5" width="9.5" height="1.8" fill="#609b52" opacity="0.42"/><rect x="34.5" y="194.5" width="6.8" height="1.8" fill="#609b52" opacity="0.42"/><rect x="42.6" y="194.5" width="4.1" height="1.8" fill="#609b52" opacity="0.42"/><rect x="48.1" y="194.5" width="15.0" height="1.8" fill="#609b52" opacity="0.42"/><rect x="64.4" y="194.5" width="1.4" height="1.8" fill="#609b52" opacity="0.42"/><rect x="12.7" y="197.1" width="4.1" height="1.8" fill="#609b52" opacity="0.42"/><rect x="12.7" y="199.8" width="10.9" height="1.8" fill="#5a9fd6" opacity=".5"/><rect x="25.0" y="199.8" width="9.5" height="1.8" fill="#c8c8d4" opacity="0.38"/><rect x="35.8" y="199.8" width="8.2" height="1.8" fill="#c8c8d4" opacity="0.38"/><rect x="45.4" y="199.8" width="9.5" height="1.8" fill="#c8c8d4" opacity="0.38"/><rect x="56.2" y="199.8" width="17.7" height="1.8" fill="#c8c8d4" opacity="0.38"/><rect x="75.3" y="199.8" width="17.7" height="1.8" fill="#c8c8d4" opacity="0.38"/><rect x="94.3" y="199.8" width="12.2" height="1.8" fill="#c8c8d4" opacity="0.38"/><rect x="107.9" y="199.8" width="4.1" height="1.8" fill="#c8c8d4" opacity="0.38"/><rect x="113.4" y="199.8" width="15.0" height="1.8" fill="#c8c8d4" opacity="0.38"/><rect x="129.7" y="199.8" width="10.9" height="1.8" fill="#c8c8d4" opacity="0.38"/><rect x="141.9" y="199.8" width="3.1" height="1.8" fill="#c8c8d4" opacity="0.38"/><rect x="15.4" y="202.5" width="10.9" height="1.8" fill="#1a88b4" opacity=".5"/><rect x="27.7" y="202.5" width="4.1" height="1.8" fill="#c8c8d4" opacity="0.38"/><rect x="33.1" y="202.5" width="6.8" height="1.8" fill="#c8c8d4" opacity="0.38"/><rect x="41.3" y="202.5" width="4.1" height="1.8" fill="#c8c8d4" opacity="0.38"/><rect x="46.7" y="202.5" width="5.4" height="1.8" fill="#c8c8d4" opacity="0.38"/><rect x="53.5" y="202.5" width="4.1" height="1.8" fill="#c8c8d4" opacity="0.38"/><rect x="59.0" y="202.5" width="5.4" height="1.8" fill="#c8c8d4" opacity="0.38"/><rect x="65.8" y="202.5" width="9.5" height="1.8" fill="#c8c8d4" opacity="0.38"/><rect x="15.4" y="205.2" width="10.9" height="1.8" fill="#4a9ad8" opacity=".5"/><rect x="27.7" y="205.2" width="4.1" height="1.8" fill="#c8c8d4" opacity="0.38"/><rect x="33.1" y="205.2" width="5.4" height="1.8" fill="#c8c8d4" opacity="0.38"/><rect x="39.9" y="205.2" width="17.7" height="1.8" fill="#c8c8d4" opacity="0.38"/><rect x="59.0" y="205.2" width="17.7" height="1.8" fill="#c8c8d4" opacity="0.38"/><rect x="78.0" y="205.2" width="2.7" height="1.8" fill="#c8c8d4" opacity="0.38"/><rect x="15.4" y="207.9" width="10.9" height="1.8" fill="#4a9ad8" opacity=".5"/><rect x="27.7" y="207.9" width="10.9" height="1.8" fill="#c8c8d4" opacity="0.38"/><rect x="39.9" y="207.9" width="6.8" height="1.8" fill="#c8c8d4" opacity="0.38"/><rect x="48.1" y="207.9" width="10.9" height="1.8" fill="#c8c8d4" opacity="0.38"/><rect x="60.3" y="207.9" width="5.4" height="1.8" fill="#c8c8d4" opacity="0.38"/><rect x="67.1" y="207.9" width="10.9" height="1.8" fill="#c8c8d4" opacity="0.38"/><rect x="79.4" y="207.9" width="1.4" height="1.8" fill="#c8c8d4" opacity="0.38"/><rect x="15.4" y="210.5" width="10.9" height="1.8" fill="#1a88b4" opacity=".5"/><rect x="27.7" y="210.5" width="12.2" height="1.8" fill="#c8c8d4" opacity="0.38"/><rect x="41.3" y="210.5" width="9.5" height="1.8" fill="#c8c8d4" opacity="0.38"/><rect x="52.2" y="210.5" width="10.9" height="1.8" fill="#c8c8d4" opacity="0.38"/><rect x="64.4" y="210.5" width="9.5" height="1.8" fill="#c8c8d4" opacity="0.38"/><rect x="75.3" y="210.5" width="8.2" height="1.8" fill="#c8c8d4" opacity="0.38"/><rect x="84.8" y="210.5" width="10.9" height="1.8" fill="#c8c8d4" opacity="0.38"/><rect x="97.0" y="210.5" width="12.2" height="1.8" fill="#c8c8d4" opacity="0.38"/><rect x="15.4" y="215.9" width="5.4" height="1.8" fill="#c8c8d4" opacity="0.42"/><rect x="22.2" y="215.9" width="6.8" height="1.8" fill="#c8c8d4" opacity="0.42"/><rect x="30.4" y="215.9" width="17.7" height="1.8" fill="#c8c8d4" opacity="0.42"/><rect x="49.4" y="215.9" width="4.1" height="1.8" fill="#c8c8d4" opacity="0.42"/><rect x="54.9" y="215.9" width="12.2" height="1.8" fill="#c8c8d4" opacity="0.42"/><rect x="68.5" y="215.9" width="5.4" height="1.8" fill="#c8c8d4" opacity="0.42"/><rect x="75.3" y="215.9" width="1.4" height="1.8" fill="#c8c8d4" opacity="0.42"/><rect x="15.4" y="218.6" width="4.1" height="1.8" fill="#c8c8d4" opacity="0.42"/><rect x="20.9" y="218.6" width="10.9" height="1.8" fill="#c8c8d4" opacity="0.42"/><rect x="33.1" y="218.6" width="15.0" height="1.8" fill="#c8c8d4" opacity="0.42"/><rect x="49.4" y="218.6" width="17.7" height="1.8" fill="#c8c8d4" opacity="0.42"/><rect x="68.5" y="218.6" width="1.4" height="1.8" fill="#c8c8d4" opacity="0.42"/><rect x="12.7" y="221.3" width="1.4" height="1.8" fill="#c8c8d4" opacity="0.42"/><rect x="12.7" y="226.6" width="4.1" height="1.8" fill="#609b52" opacity="0.42"/><rect x="14.1" y="229.3" width="4.1" height="1.8" fill="#609b52" opacity="0.42"/><rect x="19.5" y="229.3" width="10.9" height="1.8" fill="#609b52" opacity="0.42"/><rect x="31.8" y="229.3" width="15.0" height="1.8" fill="#609b52" opacity="0.42"/><rect x="48.1" y="229.3" width="10.9" height="1.8" fill="#609b52" opacity="0.42"/><rect x="60.3" y="229.3" width="5.4" height="1.8" fill="#609b52" opacity="0.42"/><rect x="14.1" y="232.0" width="12.2" height="1.8" fill="#609b52" opacity="0.42"/><rect x="27.7" y="232.0" width="15.0" height="1.8" fill="#609b52" opacity="0.42"/><rect x="44.0" y="232.0" width="4.1" height="1.8" fill="#609b52" opacity="0.42"/><rect x="49.4" y="232.0" width="8.2" height="1.8" fill="#609b52" opacity="0.42"/><rect x="59.0" y="232.0" width="8.2" height="1.8" fill="#609b52" opacity="0.42"/><rect x="68.5" y="232.0" width="17.7" height="1.8" fill="#609b52" opacity="0.42"/><rect x="87.5" y="232.0" width="9.5" height="1.8" fill="#609b52" opacity="0.42"/><rect x="98.4" y="232.0" width="4.1" height="1.8" fill="#609b52" opacity="0.42"/><rect x="14.1" y="234.7" width="12.2" height="1.8" fill="#609b52" opacity="0.42"/><rect x="27.7" y="234.7" width="8.2" height="1.8" fill="#609b52" opacity="0.42"/><rect x="37.2" y="234.7" width="12.2" height="1.8" fill="#609b52" opacity="0.42"/><rect x="50.8" y="234.7" width="6.8" height="1.8" fill="#609b52" opacity="0.42"/><rect x="59.0" y="234.7" width="4.1" height="1.8" fill="#609b52" opacity="0.42"/><rect x="64.4" y="234.7" width="10.9" height="1.8" fill="#609b52" opacity="0.42"/><rect x="12.7" y="237.3" width="4.1" height="1.8" fill="#609b52" opacity="0.42"/><rect x="12.7" y="240.0" width="10.9" height="1.8" fill="#5a9fd6" opacity=".5"/><rect x="25.0" y="240.0" width="17.7" height="1.8" fill="#c8c8d4" opacity="0.38"/><rect x="44.0" y="240.0" width="9.5" height="1.8" fill="#c8c8d4" opacity="0.38"/><rect x="54.9" y="240.0" width="5.4" height="1.8" fill="#c8c8d4" opacity="0.38"/><rect x="61.7" y="240.0" width="15.0" height="1.8" fill="#c8c8d4" opacity="0.38"/><rect x="78.0" y="240.0" width="5.4" height="1.8" fill="#c8c8d4" opacity="0.38"/><rect x="84.8" y="240.0" width="17.7" height="1.8" fill="#c8c8d4" opacity="0.38"/><rect x="103.8" y="240.0" width="12.2" height="1.8" fill="#c8c8d4" opacity="0.38"/><rect x="117.4" y="240.0" width="5.4" height="1.8" fill="#c8c8d4" opacity="0.38"/><rect x="124.2" y="240.0" width="10.9" height="1.8" fill="#c8c8d4" opacity="0.38"/><rect x="136.5" y="240.0" width="8.5" height="1.8" fill="#c8c8d4" opacity="0.38"/><rect x="15.4" y="242.7" width="10.9" height="1.8" fill="#1a88b4" opacity=".5"/><rect x="27.7" y="242.7" width="5.4" height="1.8" fill="#c8c8d4" opacity="0.38"/><rect x="34.5" y="242.7" width="4.1" height="1.8" fill="#c8c8d4" opacity="0.38"/><rect x="39.9" y="242.7" width="15.0" height="1.8" fill="#c8c8d4" opacity="0.38"/><rect x="56.2" y="242.7" width="6.8" height="1.8" fill="#c8c8d4" opacity="0.38"/><rect x="64.4" y="242.7" width="8.2" height="1.8" fill="#c8c8d4" opacity="0.38"/><rect x="73.9" y="242.7" width="4.1" height="1.8" fill="#c8c8d4" opacity="0.38"/><rect x="15.4" y="245.4" width="10.9" height="1.8" fill="#4a9ad8" opacity=".5"/><rect x="27.7" y="245.4" width="4.1" height="1.8" fill="#c8c8d4" opacity="0.38"/><rect x="33.1" y="245.4" width="17.7" height="1.8" fill="#c8c8d4" opacity="0.38"/><rect x="52.2" y="245.4" width="5.4" height="1.8" fill="#c8c8d4" opacity="0.38"/><rect x="59.0" y="245.4" width="5.4" height="1.8" fill="#c8c8d4" opacity="0.38"/><rect x="65.8" y="245.4" width="12.2" height="1.8" fill="#c8c8d4" opacity="0.38"/><rect x="79.4" y="245.4" width="1.4" height="1.8" fill="#c8c8d4" opacity="0.38"/><rect x="15.4" y="248.1" width="10.9" height="1.8" fill="#4a9ad8" opacity=".5"/><rect x="27.7" y="248.1" width="4.1" height="1.8" fill="#c8c8d4" opacity="0.38"/><rect x="33.1" y="248.1" width="10.9" height="1.8" fill="#c8c8d4" opacity="0.38"/><rect x="45.4" y="248.1" width="5.4" height="1.8" fill="#c8c8d4" opacity="0.38"/><rect x="52.2" y="248.1" width="4.1" height="1.8" fill="#c8c8d4" opacity="0.38"/><rect x="57.6" y="248.1" width="5.4" height="1.8" fill="#c8c8d4" opacity="0.38"/><rect x="64.4" y="248.1" width="15.0" height="1.8" fill="#c8c8d4" opacity="0.38"/><rect x="15.4" y="250.7" width="10.9" height="1.8" fill="#1a88b4" opacity=".5"/><rect x="27.7" y="250.7" width="9.5" height="1.8" fill="#c8c8d4" opacity="0.38"/><rect x="38.6" y="250.7" width="9.5" height="1.8" fill="#c8c8d4" opacity="0.38"/><rect x="49.4" y="250.7" width="5.4" height="1.8" fill="#c8c8d4" opacity="0.38"/><rect x="56.2" y="250.7" width="4.1" height="1.8" fill="#c8c8d4" opacity="0.38"/><rect x="61.7" y="250.7" width="17.7" height="1.8" fill="#c8c8d4" opacity="0.38"/><rect x="80.7" y="250.7" width="17.7" height="1.8" fill="#c8c8d4" opacity="0.38"/><rect x="99.8" y="250.7" width="8.2" height="1.8" fill="#c8c8d4" opacity="0.38"/><rect x="109.3" y="250.7" width="5.4" height="1.8" fill="#c8c8d4" opacity="0.38"/><rect x="116.1" y="250.7" width="1.4" height="1.8" fill="#c8c8d4" opacity="0.38"/><rect x="15.4" y="256.1" width="5.4" height="1.8" fill="#c8c8d4" opacity="0.42"/><rect x="22.2" y="256.1" width="17.7" height="1.8" fill="#c8c8d4" opacity="0.42"/><rect x="41.3" y="256.1" width="4.1" height="1.8" fill="#c8c8d4" opacity="0.42"/><rect x="46.7" y="256.1" width="17.7" height="1.8" fill="#c8c8d4" opacity="0.42"/><rect x="65.8" y="256.1" width="10.9" height="1.8" fill="#c8c8d4" opacity="0.42"/><rect x="15.4" y="258.8" width="6.8" height="1.8" fill="#c8c8d4" opacity="0.42"/><rect x="23.6" y="258.8" width="5.4" height="1.8" fill="#c8c8d4" opacity="0.42"/><rect x="30.4" y="258.8" width="8.2" height="1.8" fill="#c8c8d4" opacity="0.42"/><rect x="39.9" y="258.8" width="6.8" height="1.8" fill="#c8c8d4" opacity="0.42"/><rect x="48.1" y="258.8" width="8.2" height="1.8" fill="#c8c8d4" opacity="0.42"/><rect x="57.6" y="258.8" width="12.2" height="1.8" fill="#c8c8d4" opacity="0.42"/><rect x="12.7" y="261.5" width="1.4" height="1.8" fill="#c8c8d4" opacity="0.42"/><rect x="12.7" y="266.8" width="4.1" height="1.8" fill="#609b52" opacity="0.42"/><rect x="14.1" y="269.5" width="10.9" height="1.8" fill="#609b52" opacity="0.42"/><rect x="26.3" y="269.5" width="12.2" height="1.8" fill="#609b52" opacity="0.42"/><rect x="39.9" y="269.5" width="10.9" height="1.8" fill="#609b52" opacity="0.42"/><rect x="52.2" y="269.5" width="9.5" height="1.8" fill="#609b52" opacity="0.42"/><rect x="14.1" y="272.2" width="12.2" height="1.8" fill="#609b52" opacity="0.42"/><rect x="27.7" y="272.2" width="5.4" height="1.8" fill="#609b52" opacity="0.42"/><rect x="34.5" y="272.2" width="12.2" height="1.8" fill="#609b52" opacity="0.42"/><rect x="48.1" y="272.2" width="17.7" height="1.8" fill="#609b52" opacity="0.42"/><rect x="67.1" y="272.2" width="1.4" height="1.8" fill="#609b52" opacity="0.42"/><rect x="14.1" y="274.9" width="12.2" height="1.8" fill="#609b52" opacity="0.42"/><rect x="27.7" y="274.9" width="6.8" height="1.8" fill="#609b52" opacity="0.42"/><rect x="35.8" y="274.9" width="12.2" height="1.8" fill="#609b52" opacity="0.42"/><rect x="49.4" y="274.9" width="17.7" height="1.8" fill="#609b52" opacity="0.42"/><rect x="68.5" y="274.9" width="15.0" height="1.8" fill="#609b52" opacity="0.42"/><rect x="84.8" y="274.9" width="6.8" height="1.8" fill="#609b52" opacity="0.42"/><rect x="93.0" y="274.9" width="9.5" height="1.8" fill="#609b52" opacity="0.42"/><rect x="12.7" y="277.5" width="4.1" height="1.8" fill="#609b52" opacity="0.42"/><rect x="12.7" y="280.2" width="10.9" height="1.8" fill="#5a9fd6" opacity=".5"/><rect x="25.0" y="280.2" width="6.8" height="1.8" fill="#c8c8d4" opacity="0.38"/><rect x="33.1" y="280.2" width="5.4" height="1.8" fill="#c8c8d4" opacity="0.38"/><rect x="39.9" y="280.2" width="15.0" height="1.8" fill="#c8c8d4" opacity="0.38"/><rect x="56.2" y="280.2" width="10.9" height="1.8" fill="#c8c8d4" opacity="0.38"/><rect x="15.4" y="282.9" width="10.9" height="1.8" fill="#4a9ad8" opacity=".5"/><rect x="27.7" y="282.9" width="6.8" height="1.8" fill="#c8c8d4" opacity="0.38"/><rect x="15.4" y="285.6" width="10.9" height="1.8" fill="#4a9ad8" opacity=".5"/><rect x="27.7" y="285.6" width="6.8" height="1.8" fill="#c8c8d4" opacity="0.38"/><rect x="12.7" y="288.3" width="10.9" height="1.8" fill="#3bb88a" opacity=".5"/><rect x="25.0" y="288.3" width="6.8" height="1.8" fill="#c8c8d4" opacity="0.38"/><rect x="33.1" y="288.3" width="6.8" height="1.8" fill="#c8c8d4" opacity="0.38"/><rect x="41.3" y="288.3" width="9.5" height="1.8" fill="#c8c8d4" opacity="0.38"/><rect x="52.2" y="288.3" width="8.2" height="1.8" fill="#c8c8d4" opacity="0.38"/><rect x="61.7" y="288.3" width="6.8" height="1.8" fill="#c8c8d4" opacity="0.38"/><rect x="69.8" y="288.3" width="8.2" height="1.8" fill="#c8c8d4" opacity="0.38"/><rect x="15.4" y="290.9" width="10.9" height="1.8" fill="#4a9ad8" opacity=".5"/><rect x="27.7" y="290.9" width="10.9" height="1.8" fill="#c8c8d4" opacity="0.38"/><rect x="39.9" y="290.9" width="8.2" height="1.8" fill="#c8c8d4" opacity="0.38"/><rect x="49.4" y="290.9" width="17.7" height="1.8" fill="#c8c8d4" opacity="0.38"/><rect x="68.5" y="290.9" width="9.5" height="1.8" fill="#c8c8d4" opacity="0.38"/><rect x="79.4" y="290.9" width="12.2" height="1.8" fill="#c8c8d4" opacity="0.38"/><rect x="93.0" y="290.9" width="9.5" height="1.8" fill="#c8c8d4" opacity="0.38"/><rect x="103.8" y="290.9" width="8.2" height="1.8" fill="#c8c8d4" opacity="0.38"/><rect x="113.4" y="290.9" width="4.1" height="1.8" fill="#c8c8d4" opacity="0.38"/><rect x="15.4" y="293.6" width="10.9" height="1.8" fill="#1a88b4" opacity=".5"/><rect x="27.7" y="293.6" width="4.1" height="1.8" fill="#c8c8d4" opacity="0.38"/><rect x="33.1" y="293.6" width="9.5" height="1.8" fill="#c8c8d4" opacity="0.38"/><rect x="44.0" y="293.6" width="15.0" height="1.8" fill="#c8c8d4" opacity="0.38"/><rect x="60.3" y="293.6" width="12.2" height="1.8" fill="#c8c8d4" opacity="0.38"/><rect x="73.9" y="293.6" width="8.2" height="1.8" fill="#c8c8d4" opacity="0.38"/><rect x="83.4" y="293.6" width="6.8" height="1.8" fill="#c8c8d4" opacity="0.38"/><rect x="91.6" y="293.6" width="10.9" height="1.8" fill="#c8c8d4" opacity="0.38"/><rect x="103.8" y="293.6" width="4.1" height="1.8" fill="#c8c8d4" opacity="0.38"/><rect x="15.4" y="299.0" width="10.9" height="1.8" fill="#c8c8d4" opacity="0.42"/><rect x="27.7" y="299.0" width="15.0" height="1.8" fill="#c8c8d4" opacity="0.42"/><rect x="44.0" y="299.0" width="6.8" height="1.8" fill="#c8c8d4" opacity="0.42"/><rect x="52.2" y="299.0" width="4.1" height="1.8" fill="#c8c8d4" opacity="0.42"/><rect x="18.2" y="301.7" width="15.0" height="1.8" fill="#c8c8d4" opacity="0.42"/><rect x="34.5" y="301.7" width="8.2" height="1.8" fill="#c8c8d4" opacity="0.42"/><rect x="44.0" y="301.7" width="15.0" height="1.8" fill="#c8c8d4" opacity="0.42"/><rect x="60.3" y="301.7" width="17.7" height="1.8" fill="#c8c8d4" opacity="0.42"/><rect x="79.4" y="301.7" width="4.1" height="1.8" fill="#c8c8d4" opacity="0.42"/><rect x="84.8" y="301.7" width="12.2" height="1.8" fill="#c8c8d4" opacity="0.42"/><rect x="20.9" y="304.3" width="5.4" height="1.8" fill="#c8c8d4" opacity="0.42"/><rect x="27.7" y="304.3" width="12.2" height="1.8" fill="#c8c8d4" opacity="0.42"/><rect x="41.3" y="304.3" width="4.1" height="1.8" fill="#c8c8d4" opacity="0.42"/><rect x="46.7" y="304.3" width="15.0" height="1.8" fill="#c8c8d4" opacity="0.42"/><rect x="63.0" y="304.3" width="8.2" height="1.8" fill="#c8c8d4" opacity="0.42"/><rect x="72.6" y="304.3" width="8.2" height="1.8" fill="#c8c8d4" opacity="0.42"/><rect x="82.1" y="304.3" width="5.4" height="1.8" fill="#c8c8d4" opacity="0.42"/><rect x="18.2" y="307.0" width="4.1" height="1.8" fill="#c8c8d4" opacity="0.42"/><rect x="15.4" y="312.4" width="10.9" height="1.8" fill="#2fa866" opacity=".5"/><rect x="27.7" y="312.4" width="9.5" height="1.8" fill="#c8c8d4" opacity="0.38"/><rect x="12.7" y="315.1" width="1.4" height="1.8" fill="#c8c8d4" opacity="0.42"/><rect x="12.7" y="320.4" width="4.1" height="1.8" fill="#609b52" opacity="0.42"/><rect x="14.1" y="323.1" width="9.5" height="1.8" fill="#609b52" opacity="0.42"/><rect x="25.0" y="323.1" width="6.8" height="1.8" fill="#609b52" opacity="0.42"/><rect x="33.1" y="323.1" width="6.8" height="1.8" fill="#609b52" opacity="0.42"/><rect x="41.3" y="323.1" width="4.1" height="1.8" fill="#609b52" opacity="0.42"/><rect x="46.7" y="323.1" width="9.5" height="1.8" fill="#609b52" opacity="0.42"/><rect x="57.6" y="323.1" width="6.8" height="1.8" fill="#609b52" opacity="0.42"/><rect x="65.8" y="323.1" width="2.7" height="1.8" fill="#609b52" opacity="0.42"/><rect x="14.1" y="325.8" width="10.9" height="1.8" fill="#609b52" opacity="0.42"/><rect x="26.3" y="325.8" width="6.8" height="1.8" fill="#609b52" opacity="0.42"/><rect x="34.5" y="325.8" width="12.2" height="1.8" fill="#609b52" opacity="0.42"/><rect x="48.1" y="325.8" width="5.4" height="1.8" fill="#609b52" opacity="0.42"/><rect x="54.9" y="325.8" width="5.4" height="1.8" fill="#609b52" opacity="0.42"/><rect x="61.7" y="325.8" width="5.4" height="1.8" fill="#609b52" opacity="0.42"/><rect x="68.5" y="325.8" width="5.4" height="1.8" fill="#609b52" opacity="0.42"/><rect x="75.3" y="325.8" width="9.5" height="1.8" fill="#609b52" opacity="0.42"/><rect x="14.1" y="328.5" width="9.5" height="1.8" fill="#609b52" opacity="0.42"/><rect x="25.0" y="328.5" width="4.1" height="1.8" fill="#609b52" opacity="0.42"/><rect x="30.4" y="328.5" width="10.9" height="1.8" fill="#609b52" opacity="0.42"/><rect x="42.6" y="328.5" width="15.0" height="1.8" fill="#609b52" opacity="0.42"/><rect x="59.0" y="328.5" width="10.9" height="1.8" fill="#609b52" opacity="0.42"/><rect x="71.2" y="328.5" width="4.1" height="1.8" fill="#609b52" opacity="0.42"/><rect x="76.6" y="328.5" width="4.1" height="1.8" fill="#609b52" opacity="0.42"/><rect x="82.1" y="328.5" width="6.8" height="1.8" fill="#609b52" opacity="0.42"/><rect x="12.7" y="331.1" width="4.1" height="1.8" fill="#609b52" opacity="0.42"/><rect x="12.7" y="333.8" width="10.9" height="1.8" fill="#5a9fd6" opacity=".5"/><rect x="25.0" y="333.8" width="12.2" height="1.8" fill="#c8c8d4" opacity="0.38"/><rect x="38.6" y="333.8" width="12.2" height="1.8" fill="#c8c8d4" opacity="0.38"/><rect x="52.2" y="333.8" width="4.1" height="1.8" fill="#c8c8d4" opacity="0.38"/><rect x="15.4" y="336.5" width="10.9" height="1.8" fill="#4a9ad8" opacity=".5"/><rect x="27.7" y="336.5" width="5.4" height="1.8" fill="#c8c8d4" opacity="0.38"/><rect x="12.7" y="339.2" width="10.9" height="1.8" fill="#3bb88a" opacity=".5"/><rect x="25.0" y="339.2" width="8.2" height="1.8" fill="#c8c8d4" opacity="0.38"/><rect x="34.5" y="339.2" width="15.0" height="1.8" fill="#c8c8d4" opacity="0.38"/><rect x="50.8" y="339.2" width="12.2" height="1.8" fill="#c8c8d4" opacity="0.38"/><rect x="64.4" y="339.2" width="6.8" height="1.8" fill="#c8c8d4" opacity="0.38"/><rect x="72.6" y="339.2" width="15.0" height="1.8" fill="#c8c8d4" opacity="0.38"/><rect x="15.4" y="341.9" width="10.9" height="1.8" fill="#2fa866" opacity=".5"/><rect x="27.7" y="341.9" width="10.9" height="1.8" fill="#c8c8d4" opacity="0.38"/><rect x="39.9" y="341.9" width="5.4" height="1.8" fill="#c8c8d4" opacity="0.38"/><rect x="46.7" y="341.9" width="1.4" height="1.8" fill="#c8c8d4" opacity="0.38"/><rect x="12.7" y="344.5" width="1.4" height="1.8" fill="#c8c8d4" opacity="0.42"/><rect x="12.7" y="349.9" width="4.1" height="1.8" fill="#609b52" opacity="0.42"/><rect x="14.1" y="352.6" width="5.4" height="1.8" fill="#609b52" opacity="0.42"/><rect x="20.9" y="352.6" width="15.0" height="1.8" fill="#609b52" opacity="0.42"/><rect x="37.2" y="352.6" width="17.7" height="1.8" fill="#609b52" opacity="0.42"/><rect x="56.2" y="352.6" width="9.5" height="1.8" fill="#609b52" opacity="0.42"/><rect x="67.1" y="352.6" width="5.4" height="1.8" fill="#609b52" opacity="0.42"/><rect x="73.9" y="352.6" width="8.2" height="1.8" fill="#609b52" opacity="0.42"/><rect x="14.1" y="355.3" width="10.9" height="1.8" fill="#609b52" opacity="0.42"/><rect x="26.3" y="355.3" width="10.9" height="1.8" fill="#609b52" opacity="0.42"/><rect x="38.6" y="355.3" width="15.0" height="1.8" fill="#609b52" opacity="0.42"/><rect x="54.9" y="355.3" width="9.5" height="1.8" fill="#609b52" opacity="0.42"/><rect x="14.1" y="357.9" width="9.5" height="1.8" fill="#609b52" opacity="0.42"/><rect x="25.0" y="357.9" width="5.4" height="1.8" fill="#609b52" opacity="0.42"/><rect x="31.8" y="357.9" width="10.9" height="1.8" fill="#609b52" opacity="0.42"/><rect x="44.0" y="357.9" width="17.7" height="1.8" fill="#609b52" opacity="0.42"/><rect x="63.0" y="357.9" width="12.2" height="1.8" fill="#609b52" opacity="0.42"/><rect x="12.7" y="360.6" width="4.1" height="1.8" fill="#609b52" opacity="0.42"/><rect x="12.7" y="363.3" width="10.9" height="1.8" fill="#5a9fd6" opacity=".5"/><rect x="25.0" y="363.3" width="15.0" height="1.8" fill="#c8c8d4" opacity="0.38"/><rect x="41.3" y="363.3" width="17.7" height="1.8" fill="#c8c8d4" opacity="0.38"/><rect x="60.3" y="363.3" width="10.9" height="1.8" fill="#c8c8d4" opacity="0.38"/><rect x="72.6" y="363.3" width="4.1" height="1.8" fill="#c8c8d4" opacity="0.38"/><rect x="78.0" y="363.3" width="9.5" height="1.8" fill="#c8c8d4" opacity="0.38"/><rect x="88.9" y="363.3" width="6.8" height="1.8" fill="#c8c8d4" opacity="0.38"/><rect x="97.0" y="363.3" width="6.8" height="1.8" fill="#c8c8d4" opacity="0.38"/><rect x="105.2" y="363.3" width="6.8" height="1.8" fill="#c8c8d4" opacity="0.38"/><rect x="113.4" y="363.3" width="10.9" height="1.8" fill="#c8c8d4" opacity="0.38"/><rect x="125.6" y="363.3" width="15.0" height="1.8" fill="#c8c8d4" opacity="0.38"/><rect x="141.9" y="363.3" width="3.1" height="1.8" fill="#c8c8d4" opacity="0.38"/><rect x="15.4" y="366.0" width="10.9" height="1.8" fill="#4a9ad8" opacity=".5"/><rect x="27.7" y="366.0" width="5.4" height="1.8" fill="#c8c8d4" opacity="0.38"/><rect x="34.5" y="366.0" width="13.6" height="1.8" fill="#c8c8d4" opacity="0.38"/><rect x="15.4" y="368.7" width="6.8" height="1.8" fill="#c8c8d4" opacity="0.42"/><rect x="23.6" y="368.7" width="10.9" height="1.8" fill="#c8c8d4" opacity="0.42"/><rect x="35.8" y="368.7" width="12.2" height="1.8" fill="#c8c8d4" opacity="0.42"/><rect x="49.4" y="368.7" width="17.7" height="1.8" fill="#c8c8d4" opacity="0.42"/><rect x="68.5" y="368.7" width="9.5" height="1.8" fill="#c8c8d4" opacity="0.42"/><rect x="79.4" y="368.7" width="6.8" height="1.8" fill="#c8c8d4" opacity="0.42"/><rect x="87.5" y="368.7" width="15.0" height="1.8" fill="#c8c8d4" opacity="0.42"/><rect x="103.8" y="368.7" width="6.8" height="1.8" fill="#c8c8d4" opacity="0.42"/><rect x="18.2" y="371.3" width="9.5" height="1.8" fill="#c8c8d4" opacity="0.42"/><rect x="29.0" y="371.3" width="6.8" height="1.8" fill="#c8c8d4" opacity="0.42"/><rect x="37.2" y="371.3" width="5.4" height="1.8" fill="#c8c8d4" opacity="0.42"/><rect x="44.0" y="371.3" width="5.4" height="1.8" fill="#c8c8d4" opacity="0.42"/><rect x="50.8" y="371.3" width="6.8" height="1.8" fill="#c8c8d4" opacity="0.42"/><rect x="59.0" y="371.3" width="10.9" height="1.8" fill="#c8c8d4" opacity="0.42"/><rect x="20.9" y="374.0" width="10.9" height="1.8" fill="#4a9ad8" opacity=".5"/><rect x="33.1" y="374.0" width="17.7" height="1.8" fill="#c8c8d4" opacity="0.38"/><rect x="52.2" y="374.0" width="1.4" height="1.8" fill="#c8c8d4" opacity="0.38"/><rect x="20.9" y="376.7" width="10.9" height="1.8" fill="#d49a78" opacity="0.42"/><rect x="18.2" y="379.4" width="4.1" height="1.8" fill="#c8c8d4" opacity="0.42"/><rect x="15.4" y="382.1" width="4.1" height="1.8" fill="#c8c8d4" opacity="0.42"/><rect x="15.4" y="384.7" width="9.5" height="1.8" fill="#c8c8d4" opacity="0.42"/><rect x="26.3" y="384.7" width="12.2" height="1.8" fill="#c8c8d4" opacity="0.42"/><rect x="39.9" y="384.7" width="2.7" height="1.8" fill="#c8c8d4" opacity="0.42"/><rect x="18.2" y="387.4" width="6.8" height="1.8" fill="#c8c8d4" opacity="0.42"/><rect x="26.3" y="387.4" width="4.1" height="1.8" fill="#c8c8d4" opacity="0.42"/><rect x="31.8" y="387.4" width="15.0" height="1.8" fill="#c8c8d4" opacity="0.42"/><rect x="48.1" y="387.4" width="17.7" height="1.8" fill="#c8c8d4" opacity="0.42"/><rect x="67.1" y="387.4" width="5.4" height="1.8" fill="#c8c8d4" opacity="0.42"/><rect x="15.4" y="390.1" width="4.1" height="1.8" fill="#c8c8d4" opacity="0.42"/><rect x="12.7" y="392.8" width="1.4" height="1.8" fill="#c8c8d4" opacity="0.42"/><rect x="12.7" y="398.1" width="4.1" height="1.8" fill="#609b52" opacity="0.42"/><rect x="14.1" y="400.8" width="10.9" height="1.8" fill="#609b52" opacity="0.42"/><rect x="26.3" y="400.8" width="12.2" height="1.8" fill="#609b52" opacity="0.42"/><rect x="39.9" y="400.8" width="15.0" height="1.8" fill="#609b52" opacity="0.42"/><rect x="56.2" y="400.8" width="17.7" height="1.8" fill="#609b52" opacity="0.42"/><rect x="75.3" y="400.8" width="5.4" height="1.8" fill="#609b52" opacity="0.42"/><rect x="82.1" y="400.8" width="6.8" height="1.8" fill="#609b52" opacity="0.42"/><rect x="12.7" y="403.5" width="4.1" height="1.8" fill="#609b52" opacity="0.42"/><rect x="12.7" y="406.2" width="10.9" height="1.8" fill="#5a9fd6" opacity=".5"/><rect x="25.0" y="406.2" width="5.4" height="1.8" fill="#c8c8d4" opacity="0.38"/><rect x="31.8" y="406.2" width="6.8" height="1.8" fill="#c8c8d4" opacity="0.38"/><rect x="39.9" y="406.2" width="9.5" height="1.8" fill="#c8c8d4" opacity="0.38"/><rect x="50.8" y="406.2" width="5.4" height="1.8" fill="#c8c8d4" opacity="0.38"/><rect x="57.6" y="406.2" width="5.4" height="1.8" fill="#c8c8d4" opacity="0.38"/><rect x="64.4" y="406.2" width="5.4" height="1.8" fill="#c8c8d4" opacity="0.38"/><rect x="71.2" y="406.2" width="6.8" height="1.8" fill="#c8c8d4" opacity="0.38"/><rect x="79.4" y="406.2" width="8.2" height="1.8" fill="#c8c8d4" opacity="0.38"/><rect x="88.9" y="406.2" width="12.2" height="1.8" fill="#c8c8d4" opacity="0.38"/><rect x="102.5" y="406.2" width="12.2" height="1.8" fill="#c8c8d4" opacity="0.38"/><rect x="116.1" y="406.2" width="6.8" height="1.8" fill="#c8c8d4" opacity="0.38"/><rect x="124.2" y="406.2" width="6.8" height="1.8" fill="#c8c8d4" opacity="0.38"/><rect x="132.4" y="406.2" width="12.2" height="1.8" fill="#c8c8d4" opacity="0.38"/><rect x="15.4" y="408.9" width="10.9" height="1.8" fill="#4a9ad8" opacity=".5"/><rect x="27.7" y="408.9" width="8.2" height="1.8" fill="#c8c8d4" opacity="0.38"/><rect x="37.2" y="408.9" width="17.7" height="1.8" fill="#c8c8d4" opacity="0.38"/><rect x="56.2" y="408.9" width="17.7" height="1.8" fill="#c8c8d4" opacity="0.38"/><rect x="75.3" y="408.9" width="6.8" height="1.8" fill="#c8c8d4" opacity="0.38"/><rect x="83.4" y="408.9" width="6.8" height="1.8" fill="#c8c8d4" opacity="0.38"/><rect x="91.6" y="408.9" width="5.4" height="1.8" fill="#c8c8d4" opacity="0.38"/><rect x="15.4" y="411.5" width="10.9" height="1.8" fill="#4a9ad8" opacity=".5"/><rect x="27.7" y="411.5" width="9.5" height="1.8" fill="#c8c8d4" opacity="0.38"/><rect x="38.6" y="411.5" width="10.9" height="1.8" fill="#c8c8d4" opacity="0.38"/><rect x="50.8" y="411.5" width="9.5" height="1.8" fill="#c8c8d4" opacity="0.38"/><rect x="61.7" y="411.5" width="4.1" height="1.8" fill="#c8c8d4" opacity="0.38"/><rect x="67.1" y="411.5" width="15.0" height="1.8" fill="#c8c8d4" opacity="0.38"/><rect x="83.4" y="411.5" width="12.2" height="1.8" fill="#c8c8d4" opacity="0.38"/><rect x="15.4" y="414.2" width="10.9" height="1.8" fill="#2fa866" opacity=".5"/><rect x="27.7" y="414.2" width="12.2" height="1.8" fill="#c8c8d4" opacity="0.38"/><rect x="41.3" y="414.2" width="10.9" height="1.8" fill="#c8c8d4" opacity="0.38"/><rect x="53.5" y="414.2" width="2.7" height="1.8" fill="#c8c8d4" opacity="0.38"/><rect x="12.7" y="416.9" width="1.4" height="1.8" fill="#c8c8d4" opacity="0.42"/><rect x="12.7" y="419.6" width="4.1" height="1.8" fill="#609b52" opacity="0.42"/><rect x="14.1" y="422.3" width="17.7" height="1.8" fill="#609b52" opacity="0.42"/><rect x="33.1" y="422.3" width="9.5" height="1.8" fill="#609b52" opacity="0.42"/><rect x="44.0" y="422.3" width="15.0" height="1.8" fill="#609b52" opacity="0.42"/><rect x="60.3" y="422.3" width="4.1" height="1.8" fill="#609b52" opacity="0.42"/><rect x="65.8" y="422.3" width="8.2" height="1.8" fill="#609b52" opacity="0.42"/><rect x="75.3" y="422.3" width="4.1" height="1.8" fill="#609b52" opacity="0.42"/><rect x="80.7" y="422.3" width="5.4" height="1.8" fill="#609b52" opacity="0.42"/><rect x="87.5" y="422.3" width="8.2" height="1.8" fill="#609b52" opacity="0.42"/><rect x="12.7" y="424.9" width="4.1" height="1.8" fill="#609b52" opacity="0.42"/><rect x="12.7" y="427.6" width="10.9" height="1.8" fill="#5a9fd6" opacity=".5"/><rect x="25.0" y="427.6" width="6.8" height="1.8" fill="#c8c8d4" opacity="0.38"/><rect x="33.1" y="427.6" width="17.7" height="1.8" fill="#c8c8d4" opacity="0.38"/><rect x="15.4" y="430.3" width="10.9" height="1.8" fill="#4a9ad8" opacity=".5"/><rect x="27.7" y="430.3" width="6.8" height="1.8" fill="#c8c8d4" opacity="0.38"/><rect x="15.4" y="433.0" width="10.9" height="1.8" fill="#4a9ad8" opacity=".5"/><rect x="27.7" y="433.0" width="4.1" height="1.8" fill="#c8c8d4" opacity="0.38"/><rect x="15.4" y="435.7" width="10.9" height="1.8" fill="#4a9ad8" opacity=".5"/><rect x="27.7" y="435.7" width="4.1" height="1.8" fill="#c8c8d4" opacity="0.38"/><rect x="15.4" y="438.3" width="10.9" height="1.8" fill="#4a9ad8" opacity=".5"/><rect x="27.7" y="438.3" width="9.5" height="1.8" fill="#c8c8d4" opacity="0.38"/><rect x="15.4" y="441.0" width="10.9" height="1.8" fill="#1a9bc7" opacity=".5"/><rect x="27.7" y="441.0" width="8.2" height="1.8" fill="#c8c8d4" opacity="0.38"/><rect x="37.2" y="441.0" width="2.7" height="1.8" fill="#c8c8d4" opacity="0.38"/><rect x="12.7" y="443.7" width="10.9" height="1.8" fill="#3bb88a" opacity=".5"/><rect x="25.0" y="443.7" width="17.7" height="1.8" fill="#c8c8d4" opacity="0.38"/><rect x="44.0" y="443.7" width="4.1" height="1.8" fill="#c8c8d4" opacity="0.38"/><rect x="15.4" y="446.4" width="10.9" height="1.8" fill="#1a88b4" opacity=".5"/><rect x="27.7" y="446.4" width="5.4" height="1.8" fill="#c8c8d4" opacity="0.38"/><rect x="34.5" y="446.4" width="9.5" height="1.8" fill="#c8c8d4" opacity="0.38"/><rect x="45.4" y="446.4" width="6.8" height="1.8" fill="#c8c8d4" opacity="0.38"/><rect x="53.5" y="446.4" width="6.8" height="1.8" fill="#c8c8d4" opacity="0.38"/><rect x="61.7" y="446.4" width="15.0" height="1.8" fill="#c8c8d4" opacity="0.38"/><rect x="78.0" y="446.4" width="5.4" height="1.8" fill="#c8c8d4" opacity="0.38"/><rect x="84.8" y="446.4" width="4.1" height="1.8" fill="#c8c8d4" opacity="0.38"/><rect x="90.2" y="446.4" width="4.1" height="1.8" fill="#c8c8d4" opacity="0.38"/><rect x="95.7" y="446.4" width="10.9" height="1.8" fill="#c8c8d4" opacity="0.38"/><rect x="107.9" y="446.4" width="8.2" height="1.8" fill="#c8c8d4" opacity="0.38"/><rect x="117.4" y="446.4" width="17.7" height="1.8" fill="#c8c8d4" opacity="0.38"/><rect x="136.5" y="446.4" width="5.4" height="1.8" fill="#c8c8d4" opacity="0.38"/><rect x="143.3" y="446.4" width="1.7" height="1.8" fill="#c8c8d4" opacity="0.38"/><rect x="15.4" y="449.1" width="10.9" height="1.8" fill="#1b7dca" opacity=".5"/><rect x="27.7" y="449.1" width="17.7" height="1.8" fill="#c8c8d4" opacity="0.38"/><rect x="46.7" y="449.1" width="4.1" height="1.8" fill="#c8c8d4" opacity="0.38"/><rect x="52.2" y="449.1" width="10.9" height="1.8" fill="#c8c8d4" opacity="0.38"/><rect x="64.4" y="449.1" width="10.9" height="1.8" fill="#c8c8d4" opacity="0.38"/><rect x="76.6" y="449.1" width="6.8" height="1.8" fill="#c8c8d4" opacity="0.38"/><rect x="12.7" y="451.7" width="1.4" height="1.8" fill="#c8c8d4" opacity="0.42"/><rect x="12.7" y="457.1" width="4.1" height="1.8" fill="#609b52" opacity="0.42"/><rect x="14.1" y="459.8" width="5.4" height="1.8" fill="#609b52" opacity="0.42"/><rect x="20.9" y="459.8" width="4.1" height="1.8" fill="#609b52" opacity="0.42"/><rect x="26.3" y="459.8" width="5.4" height="1.8" fill="#609b52" opacity="0.42"/><rect x="33.1" y="459.8" width="10.9" height="1.8" fill="#609b52" opacity="0.42"/><rect x="45.4" y="459.8" width="8.2" height="1.8" fill="#609b52" opacity="0.42"/><rect x="54.9" y="459.8" width="5.4" height="1.8" fill="#609b52" opacity="0.42"/><rect x="61.7" y="459.8" width="8.2" height="1.8" fill="#609b52" opacity="0.42"/><rect x="71.2" y="459.8" width="12.2" height="1.8" fill="#609b52" opacity="0.42"/><rect x="84.8" y="459.8" width="8.2" height="1.8" fill="#609b52" opacity="0.42"/><rect x="94.3" y="459.8" width="4.1" height="1.8" fill="#609b52" opacity="0.42"/><rect x="12.7" y="462.5" width="4.1" height="1.8" fill="#609b52" opacity="0.42"/><rect x="12.7" y="465.1" width="10.9" height="1.8" fill="#5a9fd6" opacity=".5"/><rect x="25.0" y="465.1" width="5.4" height="1.8" fill="#c8c8d4" opacity="0.38"/><rect x="31.8" y="465.1" width="4.1" height="1.8" fill="#c8c8d4" opacity="0.38"/><rect x="37.2" y="465.1" width="12.2" height="1.8" fill="#c8c8d4" opacity="0.38"/><rect x="50.8" y="465.1" width="5.4" height="1.8" fill="#c8c8d4" opacity="0.38"/><rect x="15.4" y="467.8" width="10.9" height="1.8" fill="#4a9ad8" opacity=".5"/><rect x="27.7" y="467.8" width="6.8" height="1.8" fill="#c8c8d4" opacity="0.38"/><rect x="15.4" y="470.5" width="10.9" height="1.8" fill="#4a9ad8" opacity=".5"/><rect x="27.7" y="470.5" width="4.1" height="1.8" fill="#c8c8d4" opacity="0.38"/><rect x="15.4" y="473.2" width="10.9" height="1.8" fill="#4a9ad8" opacity=".5"/><rect x="27.7" y="473.2" width="12.2" height="1.8" fill="#c8c8d4" opacity="0.38"/><rect x="15.4" y="475.9" width="10.9" height="1.8" fill="#4a9ad8" opacity=".5"/><rect x="27.7" y="475.9" width="15.0" height="1.8" fill="#c8c8d4" opacity="0.38"/><rect x="44.0" y="475.9" width="1.4" height="1.8" fill="#c8c8d4" opacity="0.38"/><rect x="15.4" y="478.5" width="10.9" height="1.8" fill="#1a9bc7" opacity=".5"/><rect x="27.7" y="478.5" width="5.4" height="1.8" fill="#c8c8d4" opacity="0.38"/><rect x="34.5" y="478.5" width="5.4" height="1.8" fill="#c8c8d4" opacity="0.38"/><rect x="12.7" y="481.2" width="10.9" height="1.8" fill="#3bb88a" opacity=".5"/><rect x="25.0" y="481.2" width="12.2" height="1.8" fill="#c8c8d4" opacity="0.38"/><rect x="38.6" y="481.2" width="8.2" height="1.8" fill="#c8c8d4" opacity="0.38"/><rect x="15.4" y="483.9" width="10.9" height="1.8" fill="#1a88b4" opacity=".5"/><rect x="27.7" y="483.9" width="15.0" height="1.8" fill="#c8c8d4" opacity="0.38"/><rect x="44.0" y="483.9" width="9.5" height="1.8" fill="#c8c8d4" opacity="0.38"/><rect x="54.9" y="483.9" width="4.1" height="1.8" fill="#c8c8d4" opacity="0.38"/><rect x="60.3" y="483.9" width="15.0" height="1.8" fill="#c8c8d4" opacity="0.38"/><rect x="76.6" y="483.9" width="4.1" height="1.8" fill="#c8c8d4" opacity="0.38"/><rect x="18.2" y="486.6" width="10.9" height="1.8" fill="#1a88b4" opacity=".5"/><rect x="30.4" y="486.6" width="12.2" height="1.8" fill="#c8c8d4" opacity="0.38"/><rect x="44.0" y="486.6" width="15.0" height="1.8" fill="#c8c8d4" opacity="0.38"/><rect x="60.3" y="486.6" width="6.8" height="1.8" fill="#c8c8d4" opacity="0.38"/><rect x="68.5" y="486.6" width="15.0" height="1.8" fill="#c8c8d4" opacity="0.38"/><rect x="84.8" y="486.6" width="4.1" height="1.8" fill="#c8c8d4" opacity="0.38"/><rect x="90.2" y="486.6" width="9.5" height="1.8" fill="#c8c8d4" opacity="0.38"/><rect x="101.1" y="486.6" width="10.9" height="1.8" fill="#c8c8d4" opacity="0.38"/><rect x="113.4" y="486.6" width="10.9" height="1.8" fill="#c8c8d4" opacity="0.38"/><rect x="125.6" y="486.6" width="15.0" height="1.8" fill="#c8c8d4" opacity="0.38"/><rect x="141.9" y="486.6" width="3.1" height="1.8" fill="#c8c8d4" opacity="0.38"/><rect x="15.4" y="489.3" width="4.1" height="1.8" fill="#c8c8d4" opacity="0.42"/><rect x="15.4" y="491.9" width="10.9" height="1.8" fill="#1b7dca" opacity=".5"/><rect x="27.7" y="491.9" width="12.2" height="1.8" fill="#c8c8d4" opacity="0.38"/><rect x="41.3" y="491.9" width="8.2" height="1.8" fill="#c8c8d4" opacity="0.38"/><rect x="50.8" y="491.9" width="4.1" height="1.8" fill="#c8c8d4" opacity="0.38"/><rect x="56.2" y="491.9" width="8.2" height="1.8" fill="#c8c8d4" opacity="0.38"/><rect x="65.8" y="491.9" width="9.5" height="1.8" fill="#c8c8d4" opacity="0.38"/><rect x="76.6" y="491.9" width="9.5" height="1.8" fill="#c8c8d4" opacity="0.38"/><rect x="12.7" y="494.6" width="1.4" height="1.8" fill="#c8c8d4" opacity="0.42"/><rect x="10.0" y="497.3" width="1.4" height="1.8" fill="#c8c8d4" opacity="0.42"/></svg>
<div class="r" style="left:475.5px;top:0px;width:1523.50px;height:46.50px;background:#222336;"></div>
<div class="r" style="left:475.5px;top:46.5px;width:1378.5px;height:6px;background:linear-gradient(rgba(18,19,28,.9),rgba(18,19,28,0))"></div>
<div class="r" style="left:527px;top:0px;width:1.30px;height:46.50px;background:#34374b;"></div>
<div class="r" style="left:615.3px;top:0px;width:1.30px;height:46.50px;background:#34374b;"></div>
<svg class="r" style="left:496px;top:11px;" width="22.00" height="24.00" viewBox="0 0 22 24"><path d="M3.5 3.2 C3.5 2 4.7 1.4 5.7 2 L17.8 10.3 C18.7 10.9 18.7 12.1 17.8 12.7 L5.7 21 C4.7 21.6 3.5 21 3.5 19.8Z" fill="#32ba89"/></svg>
<svg class="r" style="left:538px;top:10px;" width="24.00" height="26.00" viewBox="0 0 24 26"><g fill="#2bdaeb"><rect x="10.8" y="1.5" width="1.6" height="4"/><rect x="5.5" y="5.5" width="12.3" height="10.5" rx="2"/>
<rect x="2" y="8" width="1.6" height="5.5"/><rect x="19.6" y="8" width="1.6" height="5.5"/>
<path d="M2.5 23.5 L2.5 21 C2.5 18.5 4.5 17 7 17 L16 17 C18.5 17 20.7 18.5 20.7 21 L20.7 23.5 L17.5 23.5 L17.5 21 C17.5 20.5 17 20 16.5 20 L6.7 20 C6.2 20 5.7 20.5 5.7 21 L5.7 23.5Z"/>
<rect x="7.3" y="20.5" width="8.7" height="3"/></g>
<g fill="#23253a"><circle cx="9" cy="9.5" r="1.4"/><circle cx="14.3" cy="9.5" r="1.4"/><rect x="8" y="12.3" width="7.5" height="1.2"/></g></svg>
<svg class="r" style="left:571px;top:10px;" width="35.00" height="26.00" viewBox="0 0 35 26"><rect x="3.5" y="4" width="28" height="18" rx="9" fill="none" stroke="#2bdaeb" stroke-width="3.3"/><circle cx="12.7" cy="13" r="5.3" fill="#2bdaeb"/></svg>
<svg class="r" style="left:626px;top:11px;" width="27.00" height="25.00" viewBox="0 0 27 25"><circle cx="10.5" cy="10.5" r="8.5" fill="#a2a3bd"/><path d="M6.3 10.5 L14.7 10.5" stroke="#23253a" stroke-width="2.3"/><path d="M16.5 16.5 L22.5 22.5" stroke="#a2a3bd" stroke-width="3" stroke-linecap="round"/></svg>
<svg class="r" style="left:661px;top:11px;" width="27.00" height="25.00" viewBox="0 0 27 25"><circle cx="10.5" cy="10.5" r="8.5" fill="#a2a3bd"/><path d="M6.3 10.5 L14.7 10.5 M10.5 6.3 L10.5 14.7" stroke="#23253a" stroke-width="2.3"/><path d="M16.5 16.5 L22.5 22.5" stroke="#a2a3bd" stroke-width="3" stroke-linecap="round"/></svg>
<svg class="r" style="left:702px;top:11px;" width="26.00" height="25.00" viewBox="0 0 26 25"><g fill="none" stroke="#a2a3bd" stroke-width="1.7" stroke-linejoin="round"><path d="M2 12 L12.5 2.5 L23 12 M5 9.8 L5 21.8 L10 21.8 L10 15 L15 15 L15 21.8 L20 21.8 L20 9.8"/></g></svg>
<div class="t" style="left:734.50px;top:15.05px;font-size:17.17px;line-height:21px;color:#a2a3bd;font-family:'Liberation Sans',sans-serif;">Home</div>
<div class="r" style="left:820.6px;top:0px;width:187px;height:47px;background:#2a2c3f;border:1px solid #393c52;border-bottom:none;border-radius:3px 3px 0 0"></div>
<svg class="r" style="left:0px;top:0px;" width="1999.00" height="50.00" viewBox="0 0 1999 50"><g fill="#c0c2d6"><path d="M836.9 16.6 L841.9 16.6 L843.9 20.9 L839.2 20.9 L836.9 24.7 L834.2 21.2Z"/><path d="M834.5 27.8 L838.6 27.8 L841.6 24.1 L844.2 27.6 L841.9 32.4 L836.9 32.4Z"/></g></svg>
<div class="t" style="left:854.20px;top:15.00px;font-size:17.31px;line-height:21px;color:#ececf2;font-family:'Liberation Sans',sans-serif;">RuneToken.sol</div>
<svg class="r" style="left:979px;top:15px;" width="18.00" height="19.00" viewBox="0 0 18 19"><path d="M3 3 L15 15.5 M15 3 L3 15.5" stroke="#d0d0dc" stroke-width="2.4" stroke-linecap="round"/></svg>
<div class="r" style="left:475.5px;top:574px;width:1523.50px;height:40.00px;background:#2a2c3f;"></div>
<svg class="r" style="left:484px;top:588px;" width="20.00" height="22.00" viewBox="0 0 20 22"><path d="M4 4 L10 10 L16 4 M4 11 L10 17 L16 11" fill="none" stroke="#a2a3bd" stroke-width="2" stroke-linecap="round" stroke-linejoin="round"/></svg>
<div class="t" style="left:1275.70px;top:587.79px;font-size:18.50px;line-height:22px;color:#a2a3bd;font-family:'Liberation Sans',sans-serif;">0</div>
<div class="r" style="left:1318.3px;top:588.6px;width:19.2px;height:19.2px;border:1.1px solid #4a4d64;border-radius:3px;background:#2e3145"></div>
<div class="t" style="left:1351.20px;top:587.85px;font-size:18.31px;line-height:22px;color:#5d6078;font-family:'Liberation Sans',sans-serif;">Listen on all transactions</div>
<svg class="r" style="left:1585px;top:588px;" width="22.00" height="21.00" viewBox="0 0 22 21"><circle cx="8.8" cy="9" r="6.3" fill="none" stroke="#a2a3bd" stroke-width="2.3"/><path d="M13.5 13.7 L18.3 18.3" stroke="#a2a3bd" stroke-width="2.6" stroke-linecap="round"/></svg>
<div class="r" style="left:1618px;top:577px;width:371px;height:37px;background:#35384c;border:1px solid #3a3d52;border-bottom:none;border-radius:4px 4px 0 0"></div>
<div class="t" style="left:1635.00px;top:587.48px;font-size:19.67px;line-height:24px;color:#9294a8;font-family:'Liberation Sans',sans-serif;">Filter with transaction hash or address</div>
<div class="r" style="left:481.8px;top:613.8px;width:1517.20px;height:408.20px;background:#ffffff;"></div>
<div class="r" style="left:483.9px;top:616px;width:1513.90px;height:403.70px;background:#e84a4a;"></div>
<div class="r" style="left:488px;top:620.2px;width:1506.40px;height:395.10px;background:#ffffff;"></div>
<div class="r" style="left:490px;top:622.8px;width:1502.10px;height:390.20px;background:#222336;"></div>
<div class="t" style="left:530.00px;top:622.64px;font-size:16.00px;line-height:19px;color:#a2a3bd;font-family:'Liberation Mono',monospace;">Type the library name to see available commands.</div>
<div class="t" style="left:529.60px;top:643.86px;font-size:14.44px;line-height:17px;color:#a2a3bd;font-family:'Liberation Mono',monospace;">creation of RuneToken pending...</div>
<svg class="r" style="left:527px;top:703px;" width="31.00" height="31.00" viewBox="0 0 31 31"><circle cx="15.5" cy="15.5" r="13.5" fill="#32ba89"/><path d="M10 15.8 L14 19.5 L21 12" fill="none" stroke="#222336" stroke-width="2.8" stroke-linecap="round" stroke-linejoin="round"/></svg>
<div class="t" style="left:583.40px;top:710.84px;font-size:16.00px;line-height:19px;color:#a2a3bd;font-family:'Liberation Mono',monospace;">[vm]</div>
<div class="t" style="left:636.2px;top:708.35px;font-size:15.973px;line-height:24px;font-family:'Liberation Mono',monospace;"><span style="font-weight:bold;color:#c6c7d8">from:</span><span style="color:#a2a3bd"> 0x5B3...eddC4 </span><span style="font-weight:bold;color:#c6c7d8">to:</span><span style="color:#a2a3bd"> RuneToken.(constructor) </span><span style="font-weight:bold;color:#c6c7d8">value:</span><span style="color:#a2a3bd"> 0 wei </span><span style="font-weight:bold;color:#c6c7d8">data:</span><span style="color:#a2a3bd"> 0x608...eddc4 </span><span style="font-weight:bold;color:#c6c7d8">logs:</span><span style="color:#a2a3bd"> 1 </span><span style="font-weight:bold;color:#c6c7d8">hash:</span><span style="color:#a2a3bd"> 0xf2d...cb48b</span></div>
<div class="r" style="left:1859.5px;top:699.9px;width:73.20px;height:37.80px;background:#0078a8;border-radius:3px;"></div>
<div class="t" style="left:1871.80px;top:709.87px;font-size:15.37px;line-height:18px;color:#ffffff;font-family:'Liberation Sans',sans-serif;font-weight:bold;">Debug</div>
<svg class="r" style="left:1944px;top:706px;" width="27.00" height="22.00" viewBox="0 0 27 22"><path d="M4 16 L13.5 7 L23 16" fill="none" stroke="#a2a3bd" stroke-width="3" stroke-linecap="round" stroke-linejoin="round"/></svg>
<div class="t" style="left:536px;top:750.21px;font-size:13.498px;line-height:20px;font-family:'Liberation Mono',monospace;font-weight:bold;color:#bdbed0">status</div>
<div class="t" style="left:957px;top:750.21px;font-size:13.498px;line-height:20px;font-family:'Liberation Mono',monospace;color:#a2a3bd">0x1 Transaction mined and execution succeed</div>
<div class="t" style="left:536px;top:788.61px;font-size:13.498px;line-height:20px;font-family:'Liberation Mono',monospace;font-weight:bold;color:#bdbed0">transaction hash</div>
<div class="t" style="left:957px;top:788.61px;font-size:13.498px;line-height:20px;font-family:'Liberation Mono',monospace;color:#a2a3bd">0xf2de1f964bfd4f9a6d67972f4e1dea39f53ac34dd5dd3de4c5e10cab2afcb48b</div>
<svg class="r" style="left:1507.8px;top:789.2px;" width="15.00" height="16.00" viewBox="0 0 15.0 16.0"><g fill="none" stroke="#a2a3bd" stroke-width="1.4" stroke-linejoin="round"><rect x="5" y="1.5" width="8" height="10" rx="1.8"/><path d="M3.2 4.5 L2.2 4.5 C1.6 4.5 1.2 5 1.2 5.5 L1.2 13.5 C1.2 14 1.6 14.5 2.2 14.5 L8.5 14.5 C9 14.5 9.5 14 9.5 13.5 L9.5 12.5"/></g></svg>
<div class="t" style="left:536px;top:835.01px;font-size:13.498px;line-height:20px;font-family:'Liberation Mono',monospace;font-weight:bold;color:#bdbed0">block hash</div>
<div class="t" style="left:957px;top:835.01px;font-size:13.498px;line-height:20px;font-family:'Liberation Mono',monospace;color:#a2a3bd">0xee6093d236c02a52a450ea73952d3dd942c9e2fe751596d07ee690f95b050588</div>
<svg class="r" style="left:1507.8px;top:835.6px;" width="15.00" height="16.00" viewBox="0 0 15.0 16.0"><g fill="none" stroke="#a2a3bd" stroke-width="1.4" stroke-linejoin="round"><rect x="5" y="1.5" width="8" height="10" rx="1.8"/><path d="M3.2 4.5 L2.2 4.5 C1.6 4.5 1.2 5 1.2 5.5 L1.2 13.5 C1.2 14 1.6 14.5 2.2 14.5 L8.5 14.5 C9 14.5 9.5 14 9.5 13.5 L9.5 12.5"/></g></svg>
<div class="t" style="left:536px;top:880.51px;font-size:13.498px;line-height:20px;font-family:'Liberation Mono',monospace;font-weight:bold;color:#bdbed0">block number</div>
<div class="t" style="left:957px;top:880.51px;font-size:13.498px;line-height:20px;font-family:'Liberation Mono',monospace;color:#a2a3bd">2</div>
<svg class="r" style="left:980.4px;top:881.1px;" width="15.00" height="16.00" viewBox="0 0 15.0 16.0"><g fill="none" stroke="#a2a3bd" stroke-width="1.4" stroke-linejoin="round"><rect x="5" y="1.5" width="8" height="10" rx="1.8"/><path d="M3.2 4.5 L2.2 4.5 C1.6 4.5 1.2 5 1.2 5.5 L1.2 13.5 C1.2 14 1.6 14.5 2.2 14.5 L8.5 14.5 C9 14.5 9.5 14 9.5 13.5 L9.5 12.5"/></g></svg>
<div class="t" style="left:536px;top:926.41px;font-size:13.498px;line-height:20px;font-family:'Liberation Mono',monospace;font-weight:bold;color:#bdbed0">contract address</div>
<div class="t" style="left:957px;top:926.41px;font-size:13.498px;line-height:20px;font-family:'Liberation Mono',monospace;color:#a2a3bd">0xd8b934580fcE35a11B58C6D73aDeE468a2833fa8</div>
<svg class="r" style="left:1313px;top:927px;" width="15.00" height="16.00" viewBox="0 0 15 16"><g fill="none" stroke="#a2a3bd" stroke-width="1.4" stroke-linejoin="round"><rect x="5" y="1.5" width="8" height="10" rx="1.8"/><path d="M3.2 4.5 L2.2 4.5 C1.6 4.5 1.2 5 1.2 5.5 L1.2 13.5 C1.2 14 1.6 14.5 2.2 14.5 L8.5 14.5 C9 14.5 9.5 14 9.5 13.5 L9.5 12.5"/></g></svg>
<div class="t" style="left:536px;top:971.41px;font-size:13.498px;line-height:20px;font-family:'Liberation Mono',monospace;font-weight:bold;color:#bdbed0">from</div>
<div class="t" style="left:957px;top:971.41px;font-size:13.498px;line-height:20px;font-family:'Liberation Mono',monospace;color:#a2a3bd">0x5B38Da6a701c568545dCfcB03FcB875f56beddC4</div>
<svg class="r" style="left:1313px;top:972px;" width="15.00" height="16.00" viewBox="0 0 15 16"><g fill="none" stroke="#a2a3bd" stroke-width="1.4" stroke-linejoin="round"><rect x="5" y="1.5" width="8" height="10" rx="1.8"/><path d="M3.2 4.5 L2.2 4.5 C1.6 4.5 1.2 5 1.2 5.5 L1.2 13.5 C1.2 14 1.6 14.5 2.2 14.5 L8.5 14.5 C9 14.5 9.5 14 9.5 13.5 L9.5 12.5"/></g></svg>
<div class="r" style="left:1911.1px;top:999.7px;width:80.80px;height:13.10px;background:#585a68;border-radius:1px;"></div>
<div class="r" style="left:1914.4px;top:1002.4px;width:10.30px;height:10.40px;background:#4a78c0;border-radius:1px;"></div>
<div class="t" style="left:1915.60px;top:999.67px;font-size:12.50px;line-height:15px;color:#c8c8d0;font-family:'Liberation Sans',sans-serif;">A</div>
<div class="t" style="left:1928.00px;top:1001.22px;font-size:10.34px;line-height:12px;color:#2a2a35;font-family:'Liberation Sans',sans-serif;">annotely.com</div>
<svg class="r" style="left:0;top:0" width="1999" height="1022"><path d="M1313.2 527.6 L1243.4 589.8 L1252.8 595.0 L1212.9 599.2 L1229.9 563.4 L1231.7 572.7Z" fill="#e84a4a" stroke="#ffffff" stroke-width="4.2" stroke-linejoin="round" paint-order="stroke fill"/></svg>
<svg class="r" style="left:0;top:0" width="1999" height="1022"><path d="M45.0 666.5 L82.7 634.2 L85.1 640.1 L91.0 614.7 L66.5 623.5 L72.4 626.0Z" fill="#e84a4a" stroke="#ffffff" stroke-width="4.2" stroke-linejoin="round" paint-order="stroke fill"/></svg>
<svg class="r" style="left:0;top:0" width="1999" height="1022"><path d="M341.0 674.6 L315.9 663.0 L314.0 667.9 L304.6 646.1 L328.6 649.9 L323.8 653.3Z" fill="#e84a4a" stroke="#ffffff" stroke-width="4.2" stroke-linejoin="round" paint-order="stroke fill"/></svg>
<svg class="r" style="left:0;top:0" width="1999" height="1022"><text x="1272.70" y="510.50" font-family="Liberation Sans" font-weight="normal" font-size="14.59" fill="#e84a4a" stroke="#ffffff" stroke-width="4" stroke-linejoin="round" paint-order="stroke fill">Transaction Receipt</text></svg>
<svg class="r" style="left:0;top:0" width="1999" height="1022"><text x="7.30" y="686.60" font-family="Liberation Sans" font-weight="normal" font-size="14.28" fill="#e84a4a" stroke="#ffffff" stroke-width="4" stroke-linejoin="round" paint-order="stroke fill">Deploy button</text></svg>
<svg class="r" style="left:0;top:0" width="1999" height="1022"><text x="348.50" y="679.90" font-family="Liberation Sans" font-weight="normal" font-size="14.23" fill="#e84a4a" stroke="#ffffff" stroke-width="4" stroke-linejoin="round" paint-order="stroke fill">Deploy Input</text></svg>
</body></html>
